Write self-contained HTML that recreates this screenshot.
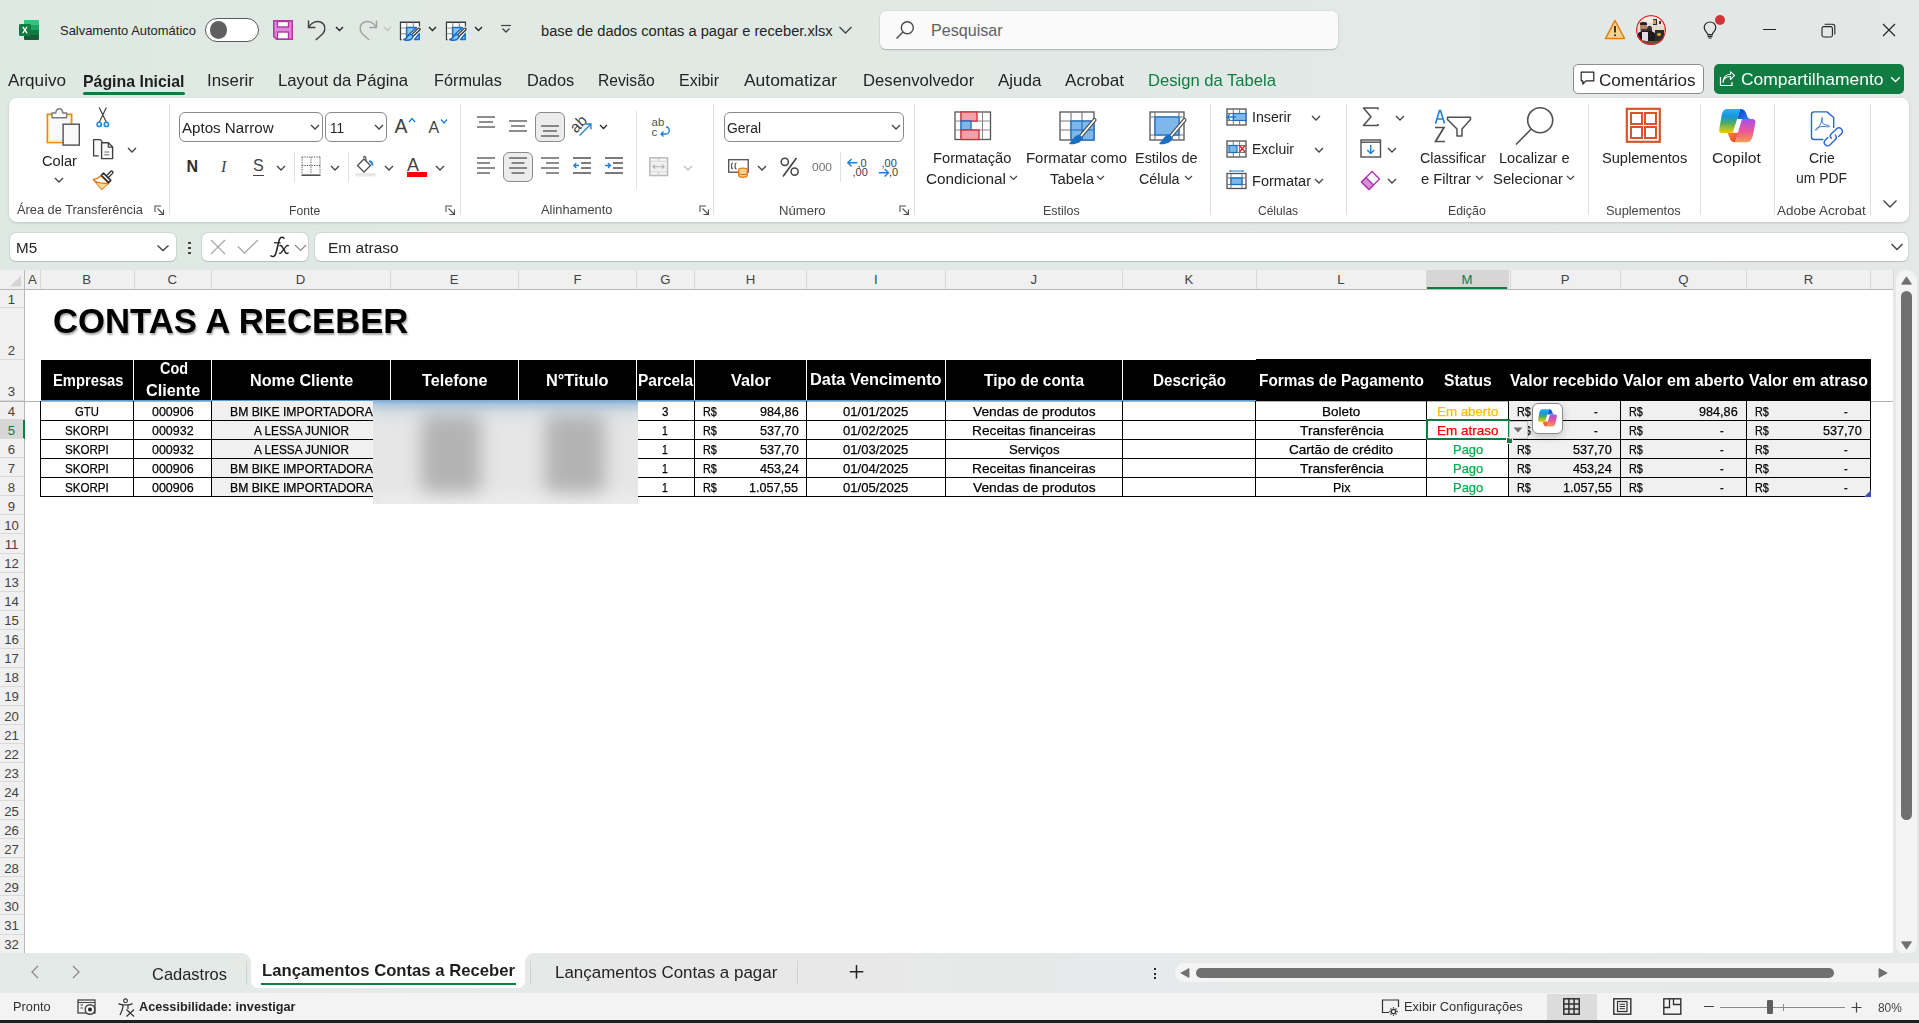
<!DOCTYPE html>
<html><head><meta charset="utf-8"><style>
html,body{margin:0;padding:0;}
body{width:1919px;height:1023px;overflow:hidden;position:relative;background:linear-gradient(90deg,#dfe9e3 0px,#e1e9e5 900px,#e2e9e6 1400px,#e4e8e7 1919px);font-family:'Liberation Sans',sans-serif;}
.t{position:absolute;white-space:pre;transform-origin:0 0;}
.r{position:absolute;}
svg.r{overflow:visible;}
</style></head><body>
<svg class="r" style="left:19px;top:20px;" width="20" height="20" viewBox="0 0 20 20" fill="none">
<rect x="5" y="0" width="15" height="20" rx="1.5" fill="#21a366"></rect>
<path d="M5 1.5 A1.5 1.5 0 0 1 6.5 0 H18.5 A1.5 1.5 0 0 1 20 1.5 V5 H5z" fill="#33c481"></path>
<rect x="5" y="10" width="15" height="5" fill="#107c41"></rect>
<path d="M5 15 H20 V18.5 A1.5 1.5 0 0 1 18.5 20 H6.5 A1.5 1.5 0 0 1 5 18.5z" fill="#185c37"></path>
<rect x="0" y="4" width="12" height="12" rx="1.2" fill="#107c41"></rect>
<path d="M3.2 6.8 L5 10 L3.1 13.2 H4.6 L5.9 10.9 L7.2 13.2 H8.8 L6.8 10 L8.7 6.8 H7.2 L5.95 9.1 L4.7 6.8z" fill="#fff"></path>
</svg>
<div class="t" style="left:60.00px;top:24.84px;font-size:12.95px;line-height:1;color:#242424;font-weight:normal;font-family:'Liberation Sans',sans-serif;">Salvamento Automático</div>
<div class="r" style="left:205px;top:17.5px;width:52px;height:22px;background:#fff;border:1.3px solid #5a5a5a;border-radius:12px;"></div>
<div class="r" style="left:209.5px;top:21px;width:17.5px;height:17.5px;background:#5f5f5f;border-radius:50%;"></div>
<svg class="r" style="left:273px;top:20px;" width="20" height="20" viewBox="0 0 20 20" fill="none">
<path d="M0.75 0.75 H19.25 V19.25 H3.5 L0.75 16.5z" fill="#d98ad8" stroke="#b0389e" stroke-width="1.5"></path>
<rect x="4.5" y="1.5" width="11" height="5.5" fill="#fff" stroke="#b0389e" stroke-width="1.4"></rect>
<rect x="4.5" y="12" width="11" height="7" fill="#fff" stroke="#b0389e" stroke-width="1.4"></rect>
</svg>
<svg class="r" style="left:306px;top:19px;" width="24" height="22" viewBox="0 0 24 22" fill="none">
<path d="M2.5 1.5 V8.5 H9.5" stroke="#424242" stroke-width="1.4" fill="none"></path>
<path d="M2.8 8.3 C5 4 10 1.5 14.5 3 C19.5 5 20 11 17 14.5 L9.8 21" stroke="#424242" stroke-width="1.4" fill="none"></path>
</svg>
<svg class="r" style="left:335.0px;top:26.25px;" width="9" height="5.5" viewBox="0 0 9 5.5" fill="none"><path d="M1 1 L4.5 4.5 L8 1" stroke="#242424" stroke-width="1.4" fill="none"></path></svg>
<svg class="r" style="left:355px;top:19px;" width="24" height="22" viewBox="0 0 24 22" fill="none">
<path d="M21.5 1.5 V8.5 H14.5" stroke="#a0a0a0" stroke-width="1.4" fill="none"></path>
<path d="M21.2 8.3 C19 4 14 1.5 9.5 3 C4.5 5 4 11 7 14.5 L14.2 21" stroke="#a0a0a0" stroke-width="1.4" fill="none"></path>
</svg>
<svg class="r" style="left:382.5px;top:26.25px;" width="9" height="5.5" viewBox="0 0 9 5.5" fill="none"><path d="M1 1 L4.5 4.5 L8 1" stroke="#c0c0c0" stroke-width="1.3" fill="none"></path></svg>
<svg class="r" style="left:396px;top:16.5px;" width="30" height="28" viewBox="0 0 30 28" fill="none">
<path d="M5.5 22.6 H4.6 V5.3 H23.3 V9.5" stroke="#3c3c3c" stroke-width="1.5" fill="#fff"></path>
<rect x="5.3" y="6" width="17.3" height="16" fill="#fff"></rect>
<path d="M5.2 11 H10.5 M5.2 16.7 H10.5 M10.8 5.5 V10.5 M17.3 5.5 V10.5" stroke="#8a8a8a" stroke-width="1.1"></path>
<path d="M10.6 10.6 H20.6 L10.6 19.5z" fill="#8cc4f0" stroke="#1a6ec2" stroke-width="1.5" stroke-linejoin="round"></path>
<path d="M23.2 16.6 V22.5 H18.6z" fill="#8cc4f0" stroke="#1a6ec2" stroke-width="1.5" stroke-linejoin="round"></path>
<path d="M23 12.2 L16.5 18.4" stroke="#2e2e2e" stroke-width="3.4" stroke-linecap="round"></path>
<path d="M23 12.2 L16.5 18.4" stroke="#f4f4f4" stroke-width="1.1" stroke-linecap="round"></path>
<path d="M15.8 17.6 C13 16.8 11.8 19 10.8 20.5 C10 21.8 9 22.3 7.8 22.5 C10 23.6 14 23.9 16 21.6 C17 20.4 17 18.6 15.8 17.6z" fill="#8cc4f0" stroke="#1a6ec2" stroke-width="1.5" stroke-linejoin="round"></path>
</svg>
<svg class="r" style="left:427.5px;top:26.25px;" width="9" height="5.5" viewBox="0 0 9 5.5" fill="none"><path d="M1 1 L4.5 4.5 L8 1" stroke="#242424" stroke-width="1.4" fill="none"></path></svg>
<svg class="r" style="left:442px;top:16.5px;" width="30" height="28" viewBox="0 0 30 28" fill="none">
<path d="M5.5 22.6 H4.6 V5.3 H23.3 V9.5" stroke="#3c3c3c" stroke-width="1.5" fill="#fff"></path>
<rect x="5.3" y="6" width="17.3" height="16" fill="#fff"></rect>
<path d="M5.2 11 H10.5 M5.2 16.7 H10.5 M10.8 5.5 V10.5 M17.3 5.5 V10.5" stroke="#8a8a8a" stroke-width="1.1"></path>
<path d="M10.6 10.6 H20.6 L10.6 19.5z" fill="#8cc4f0" stroke="#1a6ec2" stroke-width="1.5" stroke-linejoin="round"></path>
<path d="M23.2 16.6 V22.5 H18.6z" fill="#8cc4f0" stroke="#1a6ec2" stroke-width="1.5" stroke-linejoin="round"></path>
<path d="M23 12.2 L16.5 18.4" stroke="#2e2e2e" stroke-width="3.4" stroke-linecap="round"></path>
<path d="M23 12.2 L16.5 18.4" stroke="#f4f4f4" stroke-width="1.1" stroke-linecap="round"></path>
<path d="M15.8 17.6 C13 16.8 11.8 19 10.8 20.5 C10 21.8 9 22.3 7.8 22.5 C10 23.6 14 23.9 16 21.6 C17 20.4 17 18.6 15.8 17.6z" fill="#8cc4f0" stroke="#1a6ec2" stroke-width="1.5" stroke-linejoin="round"></path>
</svg>
<svg class="r" style="left:473.5px;top:26.25px;" width="9" height="5.5" viewBox="0 0 9 5.5" fill="none"><path d="M1 1 L4.5 4.5 L8 1" stroke="#242424" stroke-width="1.4" fill="none"></path></svg>
<svg class="r" style="left:500px;top:24px;" width="12" height="10" viewBox="0 0 12 10" fill="none"><path d="M1 1.5 H11" stroke="#424242" stroke-width="1.2"></path><path d="M2.5 4.5 L6 8 L9.5 4.5" stroke="#424242" stroke-width="1.3"></path></svg>
<div class="t" style="left:541.00px;top:23.58px;font-size:14.67px;line-height:1;color:#242424;font-weight:normal;font-family:'Liberation Sans',sans-serif;">base de dados contas a pagar e receber.xlsx</div>
<svg class="r" style="left:838px;top:25px;" width="15" height="10" viewBox="0 0 15 10" fill="none"><path d="M1.5 2 L7.5 8 L13.5 2" stroke="#424242" stroke-width="1.4"></path></svg>
<div class="r" style="left:880px;top:10.5px;width:458px;height:38px;background:#fafafa;border-radius:6px;box-shadow:0 1px 1.5px rgba(0,0,0,0.22), 0 0 0 0.5px rgba(0,0,0,0.06);"></div>
<svg class="r" style="left:895px;top:20px;" width="20" height="20" viewBox="0 0 20 20" fill="none"><circle cx="12.3" cy="7.7" r="6" stroke="#4a4a4a" stroke-width="1.4"></circle><path d="M8 12 L1.5 18.5" stroke="#4a4a4a" stroke-width="1.5"></path></svg>
<div class="t" style="left:931.00px;top:22.07px;font-size:16.1px;line-height:1;color:#616161;font-weight:normal;font-family:'Liberation Sans',sans-serif;">Pesquisar</div>
<svg class="r" style="left:1604px;top:19px;" width="22" height="21" viewBox="0 0 22 21" fill="none"><path d="M11 1.5 L20.5 19.5 H1.5z" fill="#fbd38c" stroke="#e07f12" stroke-width="1.6" stroke-linejoin="round"></path><path d="M11 7 V13.5" stroke="#242424" stroke-width="1.8"></path><circle cx="11" cy="16.3" r="1" fill="#242424"></circle></svg>
<div class="r" style="left:1636.2px;top:15.2px;width:29.6px;height:29.6px;border-radius:50%;overflow:hidden;background:#e6ddd0;">
<div class="r" style="left:-2px;top:-2px;width:34px;height:34px;filter:blur(0.5px);">
<div class="r" style="left:2px;top:2px;width:30px;height:8px;background:#f2ece2;"></div>
<div class="r" style="left:18.5px;top:5.5px;width:4px;height:6.5px;background:#2c2a30;"></div>
<div class="r" style="left:19.3px;top:6.5px;width:2.4px;height:4.5px;background:#c8a060;"></div>
<div class="r" style="left:24.5px;top:8px;width:2px;height:3px;background:#3a3838;"></div>
<div class="r" style="left:13px;top:12.5px;width:4.5px;height:9px;border-radius:40%;background:#3a3030;"></div>
<div class="r" style="left:6.2px;top:9.5px;width:7px;height:9.5px;border-radius:45% 45% 40% 40%;background:#b48468;"></div>
<div class="r" style="left:6.2px;top:8.8px;width:7px;height:2.6px;border-radius:50% 50% 0 0;background:#2a2222;"></div>
<div class="r" style="left:6.6px;top:15.5px;width:6.2px;height:3.5px;border-radius:0 0 50% 50%;background:#4a3630;"></div>
<div class="r" style="left:3px;top:18px;width:19px;height:14px;border-radius:35% 35% 0 0;background:#1c1a1a;"></div>
<div class="r" style="left:8px;top:19px;width:5.5px;height:11px;background:#e2dae6;"></div>
<div class="r" style="left:6px;top:26.5px;width:5px;height:2.5px;background:#b08670;"></div>
<div class="r" style="left:20.5px;top:16.5px;width:9px;height:11px;background:#2c2a2a;"></div>
<div class="r" style="left:23px;top:19.5px;width:3.8px;height:3.5px;border-radius:40%;background:#d4a434;"></div>
<div class="r" style="left:2px;top:28px;width:30px;height:6px;background:#6a5040;"></div>
</div>
<div class="r" style="left:0;top:0;width:29.6px;height:29.6px;border-radius:50%;box-shadow:0 0 0 1.3px #e02828 inset;"></div>
</div>
<svg class="r" style="left:1703px;top:21px;" width="14" height="18" viewBox="0 0 14 18" fill="none"><path d="M7 1 C3.5 1 1.2 3.6 1.2 6.6 C1.2 9 2.6 10.2 3.8 11.6 C4.4 12.3 4.6 13 4.6 13.6 H9.4 C9.4 13 9.6 12.3 10.2 11.6 C11.4 10.2 12.8 9 12.8 6.6 C12.8 3.6 10.5 1 7 1z" stroke="#242424" stroke-width="1.2"></path><path d="M4.6 15.3 H9.4 M5.3 17 H8.7" stroke="#242424" stroke-width="1.2"></path></svg>
<div class="r" style="left:1715px;top:15px;width:10px;height:10px;background:#d13438;border-radius:50%;"></div>
<div class="r" style="left:1763px;top:28.5px;width:12.5px;height:1.2px;background:#242424;"></div>
<svg class="r" style="left:1821px;top:22.5px;" width="15" height="15" viewBox="0 0 15 15" fill="none"><rect x="1" y="3.6" width="10.4" height="10.4" rx="1.8" stroke="#242424" stroke-width="1.1"></rect><path d="M3.6 1.2 H11.5 C12.8 1.2 13.8 2.2 13.8 3.5 V11.4" stroke="#242424" stroke-width="1.1"></path></svg>
<svg class="r" style="left:1882px;top:23px;" width="14" height="14" viewBox="0 0 14 14" fill="none"><path d="M1 1 L13 13 M13 1 L1 13" stroke="#242424" stroke-width="1.2"></path></svg>
<div class="t" style="left: 8.3px; top: 72.95px; font-size: 16.6px; line-height: 1; color: rgb(36, 36, 36); font-weight: normal; font-family: &quot;Liberation Sans&quot;, sans-serif; transform: scaleX(1.0308);">Arquivo</div>
<div class="t" style="left: 207px; top: 72.95px; font-size: 16.6px; line-height: 1; color: rgb(36, 36, 36); font-weight: normal; font-family: &quot;Liberation Sans&quot;, sans-serif; transform: scaleX(1.0193);">Inserir</div>
<div class="t" style="left: 278px; top: 72.95px; font-size: 16.6px; line-height: 1; color: rgb(36, 36, 36); font-weight: normal; font-family: &quot;Liberation Sans&quot;, sans-serif; transform: scaleX(1.0064);">Layout da Página</div>
<div class="t" style="left: 433.6px; top: 72.95px; font-size: 16.6px; line-height: 1; color: rgb(36, 36, 36); font-weight: normal; font-family: &quot;Liberation Sans&quot;, sans-serif; transform: scaleX(0.9804);">Fórmulas</div>
<div class="t" style="left: 526.6px; top: 72.95px; font-size: 16.6px; line-height: 1; color: rgb(36, 36, 36); font-weight: normal; font-family: &quot;Liberation Sans&quot;, sans-serif; transform: scaleX(0.984);">Dados</div>
<div class="t" style="left: 598px; top: 72.95px; font-size: 16.6px; line-height: 1; color: rgb(36, 36, 36); font-weight: normal; font-family: &quot;Liberation Sans&quot;, sans-serif; transform: scaleX(0.9441);">Revisão</div>
<div class="t" style="left: 679.3px; top: 72.95px; font-size: 16.6px; line-height: 1; color: rgb(36, 36, 36); font-weight: normal; font-family: &quot;Liberation Sans&quot;, sans-serif; transform: scaleX(0.9639);">Exibir</div>
<div class="t" style="left: 744.4px; top: 72.95px; font-size: 16.6px; line-height: 1; color: rgb(36, 36, 36); font-weight: normal; font-family: &quot;Liberation Sans&quot;, sans-serif; transform: scaleX(1.0503);">Automatizar</div>
<div class="t" style="left: 862.5px; top: 72.95px; font-size: 16.6px; line-height: 1; color: rgb(36, 36, 36); font-weight: normal; font-family: &quot;Liberation Sans&quot;, sans-serif; transform: scaleX(1.0046);">Desenvolvedor</div>
<div class="t" style="left: 998px; top: 72.95px; font-size: 16.6px; line-height: 1; color: rgb(36, 36, 36); font-weight: normal; font-family: &quot;Liberation Sans&quot;, sans-serif; transform: scaleX(1.0247);">Ajuda</div>
<div class="t" style="left: 1065.4px; top: 72.95px; font-size: 16.6px; line-height: 1; color: rgb(36, 36, 36); font-weight: normal; font-family: &quot;Liberation Sans&quot;, sans-serif; transform: scaleX(1.0334);">Acrobat</div>
<div class="t" style="left: 83px; top: 73.29px; font-size: 16.2px; line-height: 1; color: rgb(31, 31, 31); font-weight: bold; font-family: &quot;Liberation Sans&quot;, sans-serif; transform: scaleX(0.981);">Página Inicial</div>
<div class="r" style="left:83px;top:92px;width:101.5px;height:3px;background:#107c41;border-radius:1.5px;"></div>
<div class="t" style="left: 1148px; top: 72.95px; font-size: 16.6px; line-height: 1; color: rgb(16, 124, 65); font-weight: normal; font-family: &quot;Liberation Sans&quot;, sans-serif; transform: scaleX(1.0005);">Design da Tabela</div>
<div class="r" style="left:1573px;top:64px;width:131px;height:30px;background:#fff;border:1px solid #8c8c8c;border-radius:5px;box-sizing:border-box;"></div>
<svg class="r" style="left:1580px;top:71px;" width="15" height="15" viewBox="0 0 15 15" fill="none"><path d="M1.2 1.2 H13.8 V9.8 H6 L2.8 13 V9.8 H1.2z" stroke="#242424" stroke-width="1.2" stroke-linejoin="round"></path></svg>
<div class="t" style="left: 1599px; top: 71.61px; font-size: 17px; line-height: 1; color: rgb(36, 36, 36); font-weight: normal; font-family: &quot;Liberation Sans&quot;, sans-serif; transform: scaleX(1.0023);">Comentários</div>
<div class="r" style="left:1714px;top:64px;width:190px;height:30px;background:#107c41;border-radius:5px;"></div>
<svg class="r" style="left:1719px;top:71px;" width="17" height="16" viewBox="0 0 17 16" fill="none"><path d="M1.5 6 V14.5 H13 V11" stroke="#fff" stroke-width="1.2"></path><path d="M4 11.5 C4.5 7.5 7.5 5.5 11.5 5.5 V8.5 L15.5 4.3 L11.5 0.8 V3.3 C6.5 3.3 4 7 4 11.5z" stroke="#fff" stroke-width="1.1" stroke-linejoin="round"></path></svg>
<div class="t" style="left: 1740.5px; top: 71.27px; font-size: 17.4px; line-height: 1; color: rgb(255, 255, 255); font-weight: normal; font-family: &quot;Liberation Sans&quot;, sans-serif; transform: scaleX(1.0029);">Compartilhamento</div>
<svg class="r" style="left:1890px;top:76px;" width="11" height="7" viewBox="0 0 11 7" fill="none"><path d="M1.2 1.2 L5.5 5.5 L9.8 1.2" stroke="#fff" stroke-width="1.3"></path></svg>
<div class="r" style="left:9px;top:98px;width:1900px;height:124px;background:#fff;border-radius:8px;box-shadow:0 1px 2.5px rgba(0,0,0,0.16);"></div>
<div class="r" style="left:169px;top:104px;width:1px;height:111px;background:#e0e0e0;"></div>
<div class="r" style="left:460px;top:104px;width:1px;height:111px;background:#e0e0e0;"></div>
<div class="r" style="left:713px;top:104px;width:1px;height:111px;background:#e0e0e0;"></div>
<div class="r" style="left:914px;top:104px;width:1px;height:111px;background:#e0e0e0;"></div>
<div class="r" style="left:1210px;top:104px;width:1px;height:111px;background:#e0e0e0;"></div>
<div class="r" style="left:1346px;top:104px;width:1px;height:111px;background:#e0e0e0;"></div>
<div class="r" style="left:1588px;top:104px;width:1px;height:111px;background:#e0e0e0;"></div>
<div class="r" style="left:1700px;top:104px;width:1px;height:111px;background:#e0e0e0;"></div>
<div class="r" style="left:1774px;top:104px;width:1px;height:111px;background:#e0e0e0;"></div>
<div class="r" style="left:1870px;top:104px;width:1px;height:111px;background:#e0e0e0;"></div>
<div class="t" style="left: 17px; top: 204.36px; font-size: 12.8px; line-height: 1; color: rgb(66, 66, 66); font-weight: normal; font-family: &quot;Liberation Sans&quot;, sans-serif; transform: scaleX(1.0006);">Área de Transferência</div>
<div class="t" style="left: 288.5px; top: 204.7px; font-size: 12.4px; line-height: 1; color: rgb(66, 66, 66); font-weight: normal; font-family: &quot;Liberation Sans&quot;, sans-serif; transform: scaleX(0.9846);">Fonte</div>
<div class="t" style="left: 541px; top: 204.36px; font-size: 12.8px; line-height: 1; color: rgb(66, 66, 66); font-weight: normal; font-family: &quot;Liberation Sans&quot;, sans-serif; transform: scaleX(1.0036);">Alinhamento</div>
<div class="t" style="left: 779.4px; top: 204.2px; font-size: 13px; line-height: 1; color: rgb(66, 66, 66); font-weight: normal; font-family: &quot;Liberation Sans&quot;, sans-serif; transform: scaleX(1.0076);">Número</div>
<div class="t" style="left: 1043px; top: 204.62px; font-size: 12.5px; line-height: 1; color: rgb(66, 66, 66); font-weight: normal; font-family: &quot;Liberation Sans&quot;, sans-serif; transform: scaleX(0.9938);">Estilos</div>
<div class="t" style="left: 1257.6px; top: 204.87px; font-size: 12.2px; line-height: 1; color: rgb(66, 66, 66); font-weight: normal; font-family: &quot;Liberation Sans&quot;, sans-serif; transform: scaleX(0.9863);">Células</div>
<div class="t" style="left: 1447.6px; top: 204.7px; font-size: 12.4px; line-height: 1; color: rgb(66, 66, 66); font-weight: normal; font-family: &quot;Liberation Sans&quot;, sans-serif; transform: scaleX(0.9976);">Edição</div>
<div class="t" style="left: 1606px; top: 204.62px; font-size: 12.5px; line-height: 1; color: rgb(66, 66, 66); font-weight: normal; font-family: &quot;Liberation Sans&quot;, sans-serif; transform: scaleX(1.0237);">Suplementos</div>
<div class="t" style="left: 1777px; top: 203.94px; font-size: 13.3px; line-height: 1; color: rgb(66, 66, 66); font-weight: normal; font-family: &quot;Liberation Sans&quot;, sans-serif; transform: scaleX(1.0166);">Adobe Acrobat</div>
<svg class="r" style="left:154px;top:204.5px;" width="11" height="11" viewBox="0 0 11 11" fill="none"><path d="M1 7 V1 H7" stroke="#505050" stroke-width="1.1"></path><path d="M3.5 3.5 L9.5 9.5 M4.5 9.5 H9.5 V4.5" stroke="#505050" stroke-width="1.1"></path></svg>
<svg class="r" style="left:445px;top:204.5px;" width="11" height="11" viewBox="0 0 11 11" fill="none"><path d="M1 7 V1 H7" stroke="#505050" stroke-width="1.1"></path><path d="M3.5 3.5 L9.5 9.5 M4.5 9.5 H9.5 V4.5" stroke="#505050" stroke-width="1.1"></path></svg>
<svg class="r" style="left:699px;top:204.5px;" width="11" height="11" viewBox="0 0 11 11" fill="none"><path d="M1 7 V1 H7" stroke="#505050" stroke-width="1.1"></path><path d="M3.5 3.5 L9.5 9.5 M4.5 9.5 H9.5 V4.5" stroke="#505050" stroke-width="1.1"></path></svg>
<svg class="r" style="left:899px;top:204.5px;" width="11" height="11" viewBox="0 0 11 11" fill="none"><path d="M1 7 V1 H7" stroke="#505050" stroke-width="1.1"></path><path d="M3.5 3.5 L9.5 9.5 M4.5 9.5 H9.5 V4.5" stroke="#505050" stroke-width="1.1"></path></svg>
<svg class="r" style="left:1882px;top:199px;" width="16" height="10" viewBox="0 0 16 10" fill="none"><path d="M1.5 1.5 L8 8 L14.5 1.5" stroke="#424242" stroke-width="1.4"></path></svg>
<svg class="r" style="left:40px;top:102px;" width="46" height="48" viewBox="0 0 46 48" fill="none">
<rect x="7.3" y="12.2" width="24.4" height="28.4" fill="#fafafa" stroke="#e8891a" stroke-width="1.5"></rect>
<rect x="8.8" y="13.7" width="21.4" height="25.4" fill="#fafafa" stroke="#f9dc8e" stroke-width="1.2"></rect>
<path d="M12 11 H15.8 C16 8.4 17.5 6.8 19.3 6.8 C21.1 6.8 22.6 8.4 22.8 11 H26.6 V15.7 H12z" fill="#fafafa" stroke="#7a7a7a" stroke-width="1.4" stroke-linejoin="round"></path>
<rect x="23.1" y="22.2" width="16.2" height="20.9" fill="#fafafa" stroke="#505050" stroke-width="1.4"></rect>
</svg>
<div class="t" style="left: 42px; top: 153.56px; font-size: 14.7px; line-height: 1; color: rgb(36, 36, 36); font-weight: normal; font-family: &quot;Liberation Sans&quot;, sans-serif; transform: scaleX(0.9969);">Colar</div>
<svg class="r" style="left:54.0px;top:176.5px;" width="10" height="6.0" viewBox="0 0 10 6.0" fill="none"><path d="M1 1 L5.0 5.0 L9 1" stroke="#424242" stroke-width="1.3" fill="none"></path></svg>
<svg class="r" style="left:94px;top:106px;" width="17" height="22" viewBox="0 0 17 22" fill="none">
<path d="M5.2 1.5 L12.4 16.3 M12.4 1.5 L5.2 16.3" stroke="#404040" stroke-width="1.2"></path>
<circle cx="5.2" cy="18.4" r="2.1" stroke="#1b8ad8" stroke-width="1.6" fill="#fff"></circle>
<circle cx="12.4" cy="18.4" r="2.1" stroke="#1b8ad8" stroke-width="1.6" fill="#fff"></circle>
</svg>
<svg class="r" style="left:92px;top:138px;" width="22" height="22" viewBox="0 0 22 22" fill="none">
<path d="M6.8 17.9 H1.6 V1.6 H8.3 L10.4 3.7" stroke="#404040" stroke-width="1.3" fill="#fafafa" stroke-linejoin="round"></path>
<path d="M9.6 4.8 H16.5 L20.6 8.9 V20.6 H9.6z" fill="#fafafa" stroke="#404040" stroke-width="1.4" stroke-linejoin="round"></path>
<path d="M16.3 4.8 V9.1 H20.6" stroke="#404040" stroke-width="1.2"></path>
<path d="M12.3 14 H17.3 M12.3 16.7 H17.3" stroke="#707070" stroke-width="1.1"></path>
</svg>
<svg class="r" style="left:127.0px;top:146.5px;" width="10" height="6.0" viewBox="0 0 10 6.0" fill="none"><path d="M1 1 L5.0 5.0 L9 1" stroke="#424242" stroke-width="1.3" fill="none"></path></svg>
<svg class="r" style="left:88px;top:164px;" width="30" height="30" viewBox="0 0 30 30" fill="none">
<path d="M13.2 11.7 C10.5 14 8 15 5.4 15.5 L13.8 25.2 L20.5 19.1z" fill="#fff" stroke="#e37410" stroke-width="1.5" stroke-linejoin="round"></path>
<path d="M8.6 19 L13.8 25 L19.3 20.2 C15 19.9 11.5 19.5 8.6 19z" fill="#fcd98c"></path>
<path d="M7.6 17.9 C11 18.8 16 19.5 20 19.6" stroke="#e37410" stroke-width="1.4"></path>
<path d="M19.2 12.8 L23.6 8.4" stroke="#303030" stroke-width="4" stroke-linecap="round"></path>
<path d="M19.2 12.8 L23.6 8.4" stroke="#fff" stroke-width="1.4" stroke-linecap="round"></path>
<path d="M13.3 11.3 L15.5 9.1 L22.8 16.4 L20.6 18.6z" fill="#fff" stroke="#303030" stroke-width="1.5" stroke-linejoin="round"></path>
</svg>
<div class="r" style="left:179px;top:112px;width:143.5px;height:30px;background:#fff;border:1px solid #8a8a8a;border-radius:6px;box-sizing:border-box;"></div>
<div class="t" style="left: 182px; top: 119.92px; font-size: 15.1px; line-height: 1; color: rgb(36, 36, 36); font-weight: normal; font-family: &quot;Liberation Sans&quot;, sans-serif; transform: scaleX(1.0018);">Aptos Narrow</div>
<svg class="r" style="left:310.0px;top:124.0px;" width="10" height="6.0" viewBox="0 0 10 6.0" fill="none"><path d="M1 1 L5.0 5.0 L9 1" stroke="#424242" stroke-width="1.3" fill="none"></path></svg>
<div class="r" style="left:325px;top:112px;width:61.5px;height:30px;background:#fff;border:1px solid #8a8a8a;border-radius:6px;box-sizing:border-box;"></div>
<div class="t" style="left: 330px; top: 120px; font-size: 15px; line-height: 1; color: rgb(36, 36, 36); font-weight: normal; font-family: &quot;Liberation Sans&quot;, sans-serif; transform: scaleX(0.8987);">11</div>
<svg class="r" style="left:374.0px;top:124.0px;" width="10" height="6.0" viewBox="0 0 10 6.0" fill="none"><path d="M1 1 L5.0 5.0 L9 1" stroke="#424242" stroke-width="1.3" fill="none"></path></svg>
<div class="t" style="left:394.50px;top:116.99px;font-size:19.5px;line-height:1;color:#424242;font-weight:normal;font-family:'Liberation Sans',sans-serif;">A</div>
<svg class="r" style="left:407.5px;top:117px;" width="8" height="6" viewBox="0 0 8 6" fill="none"><path d="M1 5 L4 1.5 L7 5" stroke="#1b7fd6" stroke-width="1.3"></path></svg>
<div class="t" style="left:428.50px;top:119.96px;font-size:16px;line-height:1;color:#424242;font-weight:normal;font-family:'Liberation Sans',sans-serif;">A</div>
<svg class="r" style="left:440px;top:117.5px;" width="8" height="6" viewBox="0 0 8 6" fill="none"><path d="M1 1.5 L4 5 L7 1.5" stroke="#1b7fd6" stroke-width="1.3"></path></svg>
<div class="t" style="left:186.50px;top:158.76px;font-size:16px;line-height:1;color:#303030;font-weight:bold;font-family:'Liberation Sans',sans-serif;">N</div>
<div class="t" style="left:221.00px;top:158.76px;font-size:16px;line-height:1;color:#424242;font-weight:normal;font-family:'Liberation Sans',sans-serif;font-family:'Liberation Serif',serif;font-style:italic;">I</div>
<div class="t" style="left:253.00px;top:157.96px;font-size:16px;line-height:1;color:#424242;font-weight:normal;font-family:'Liberation Sans',sans-serif;">S</div>
<div class="r" style="left:252.5px;top:174.6px;width:11px;height:1.3px;background:#424242;"></div>
<svg class="r" style="left:276.0px;top:164.5px;" width="10" height="6.0" viewBox="0 0 10 6.0" fill="none"><path d="M1 1 L5.0 5.0 L9 1" stroke="#424242" stroke-width="1.3" fill="none"></path></svg>
<div class="r" style="left:294px;top:152px;width:1px;height:30px;background:#e0e0e0;"></div>
<svg class="r" style="left:301px;top:156px;" width="21" height="21" viewBox="0 0 21 21" fill="none">
<path d="M1 1 H19 M1 1 V18 M19 1 V18 M10 1 V18 M1 9.5 H19" stroke="#505050" stroke-width="1" stroke-dasharray="1.2 1.2"></path>
<path d="M0.5 19.2 H19.5" stroke="#505050" stroke-width="1.6"></path>
</svg>
<svg class="r" style="left:330.0px;top:164.5px;" width="10" height="6.0" viewBox="0 0 10 6.0" fill="none"><path d="M1 1 L5.0 5.0 L9 1" stroke="#424242" stroke-width="1.3" fill="none"></path></svg>
<div class="r" style="left:348px;top:152px;width:1px;height:30px;background:#e0e0e0;"></div>
<svg class="r" style="left:355px;top:156px;" width="22" height="22" viewBox="0 0 22 22" fill="none">
<path d="M9 2 C8 1 9.5 -0.2 10.5 0.8 L11.5 6" stroke="#505050" stroke-width="1.2"></path>
<path d="M2.5 9.5 L9 3 L15.5 9.5 L9 16z" fill="#fff" stroke="#505050" stroke-width="1.4" stroke-linejoin="round"></path>
<path d="M14 5 C16.5 5.5 17.5 7 17.5 9.5" stroke="#1b7fd6" stroke-width="1.8"></path>
<rect x="0.5" y="17" width="20" height="3.5" fill="#e8e8e8"></rect>
</svg>
<svg class="r" style="left:384.0px;top:164.5px;" width="10" height="6.0" viewBox="0 0 10 6.0" fill="none"><path d="M1 1 L5.0 5.0 L9 1" stroke="#424242" stroke-width="1.3" fill="none"></path></svg>
<div class="t" style="left:407.00px;top:156.26px;font-size:18px;line-height:1;color:#424242;font-weight:normal;font-family:'Liberation Sans',sans-serif;">A</div>
<div class="r" style="left:406.5px;top:172px;width:20.5px;height:4.6px;background:#ff0000;"></div>
<svg class="r" style="left:435.0px;top:164.5px;" width="10" height="6.0" viewBox="0 0 10 6.0" fill="none"><path d="M1 1 L5.0 5.0 L9 1" stroke="#424242" stroke-width="1.3" fill="none"></path></svg>
<div class="r" style="left:535px;top:112px;width:30px;height:30px;background:#ececec;border:1px solid #8a8a8a;border-radius:6px;box-sizing:border-box;"></div>
<div class="r" style="left:503px;top:152px;width:30px;height:30px;background:#ececec;border:1px solid #8a8a8a;border-radius:6px;box-sizing:border-box;"></div>
<svg class="r" style="left:477px;top:116px;" width="20" height="20" viewBox="0 0 20 20" fill="none"><path d="M0 1 H18" stroke="#505050" stroke-width="1.3"></path><path d="M2 6 H16" stroke="#505050" stroke-width="1.3"></path><path d="M0 11 H18" stroke="#505050" stroke-width="1.3"></path></svg>
<svg class="r" style="left:509px;top:120px;" width="20" height="20" viewBox="0 0 20 20" fill="none"><path d="M0 1 H18" stroke="#505050" stroke-width="1.3"></path><path d="M2 6 H16" stroke="#505050" stroke-width="1.3"></path><path d="M0 11 H18" stroke="#505050" stroke-width="1.3"></path></svg>
<svg class="r" style="left:541px;top:124px;" width="20" height="20" viewBox="0 0 20 20" fill="none"><path d="M0 2 H18" stroke="#505050" stroke-width="1.3"></path><path d="M2 7 H16" stroke="#505050" stroke-width="1.3"></path><path d="M0 12 H18" stroke="#505050" stroke-width="1.3"></path></svg>
<svg class="r" style="left:477px;top:157px;" width="20" height="20" viewBox="0 0 20 20" fill="none"><path d="M0 1 H18" stroke="#505050" stroke-width="1.3"></path><path d="M0 6 H13" stroke="#505050" stroke-width="1.3"></path><path d="M0 11 H18" stroke="#505050" stroke-width="1.3"></path><path d="M0 16 H13" stroke="#505050" stroke-width="1.3"></path></svg>
<svg class="r" style="left:509px;top:157px;" width="20" height="20" viewBox="0 0 20 20" fill="none"><path d="M0 1 H18" stroke="#505050" stroke-width="1.3"></path><path d="M2.5 6 H15.5" stroke="#505050" stroke-width="1.3"></path><path d="M0 11 H18" stroke="#505050" stroke-width="1.3"></path><path d="M2.5 16 H15.5" stroke="#505050" stroke-width="1.3"></path></svg>
<svg class="r" style="left:541px;top:157px;" width="20" height="20" viewBox="0 0 20 20" fill="none"><path d="M0 1 H18" stroke="#505050" stroke-width="1.3"></path><path d="M5 6 H18" stroke="#505050" stroke-width="1.3"></path><path d="M0 11 H18" stroke="#505050" stroke-width="1.3"></path><path d="M5 16 H18" stroke="#505050" stroke-width="1.3"></path></svg>
<svg class="r" style="left:573px;top:157px;" width="20" height="20" viewBox="0 0 20 20" fill="none"><path d="M0 1 H18 M8 6 H18 M8 11 H18 M0 16 H18" stroke="#505050" stroke-width="1.3"></path><path d="M6 8.5 H0.8 M3.3 6 L0.8 8.5 L3.3 11" stroke="#1b7fd6" stroke-width="1.3"></path></svg>
<svg class="r" style="left:605px;top:157px;" width="20" height="20" viewBox="0 0 20 20" fill="none"><path d="M0 1 H18 M8 6 H18 M8 11 H18 M0 16 H18" stroke="#505050" stroke-width="1.3"></path><path d="M0 8.5 H5.5 M3 6 L5.5 8.5 L3 11" stroke="#1b7fd6" stroke-width="1.3"></path></svg>
<div class="t" style="left:574px;top:113.5px;font-size:15.5px;line-height:1;color:#424242;transform:rotate(-45deg);transform-origin:9px 14px;">ab</div>
<svg class="r" style="left:578px;top:120px;" width="15" height="17" viewBox="0 0 15 17" fill="none"><path d="M1.5 15.5 L13 4 M7.5 4 H13 V9.5" stroke="#1b82d4" stroke-width="1.3"></path></svg>
<svg class="r" style="left:598.8px;top:124.25px;" width="9" height="5.5" viewBox="0 0 9 5.5" fill="none"><path d="M1 1 L4.5 4.5 L8 1" stroke="#242424" stroke-width="1.3" fill="none"></path></svg>
<div class="r" style="left:636px;top:111px;width:1px;height:78px;background:#e0e0e0;"></div>
<div class="t" style="left:651.50px;top:116.77px;font-size:11.5px;line-height:1;color:#505050;font-weight:normal;font-family:'Liberation Sans',sans-serif;">ab</div>
<div class="t" style="left:651.50px;top:126.77px;font-size:11.5px;line-height:1;color:#505050;font-weight:normal;font-family:'Liberation Sans',sans-serif;">c</div>
<svg class="r" style="left:659px;top:126px;" width="12" height="12" viewBox="0 0 12 12" fill="none"><path d="M7 1 C11 1 11.5 8 7 8 H2 M4.5 5.5 L2 8 L4.5 10.5" stroke="#1b7fd6" stroke-width="1.3"></path></svg>
<svg class="r" style="left:649px;top:157px;" width="20" height="20" viewBox="0 0 20 20" fill="none"><rect x="0.7" y="0.7" width="18" height="18" fill="#ddd" stroke="#b8b8b8" stroke-width="1.2"></rect><rect x="2" y="5" width="15.4" height="9.4" fill="#f0f0f0"></rect><path d="M2 2.8 H8 M11 2.8 H17 M2 16.4 H8 M11 16.4 H17" stroke="#fff" stroke-width="1.2"></path><path d="M4 9.7 H15 M6 7.7 L4 9.7 L6 11.7 M13 7.7 L15 9.7 L13 11.7" stroke="#b0b0b0" stroke-width="1.1"></path></svg>
<svg class="r" style="left:683.0px;top:164.5px;" width="10" height="6.0" viewBox="0 0 10 6.0" fill="none"><path d="M1 1 L5.0 5.0 L9 1" stroke="#b8b8b8" stroke-width="1.2" fill="none"></path></svg>
<div class="r" style="left:724px;top:112px;width:180px;height:30px;background:#fff;border:1px solid #8a8a8a;border-radius:6px;box-sizing:border-box;"></div>
<div class="t" style="left: 727px; top: 120.85px; font-size: 14px; line-height: 1; color: rgb(36, 36, 36); font-weight: normal; font-family: &quot;Liberation Sans&quot;, sans-serif; transform: scaleX(0.9932);">Geral</div>
<svg class="r" style="left:891.0px;top:124.0px;" width="10" height="6.0" viewBox="0 0 10 6.0" fill="none"><path d="M1 1 L5.0 5.0 L9 1" stroke="#424242" stroke-width="1.3" fill="none"></path></svg>
<svg class="r" style="left:728px;top:159px;" width="22" height="19" viewBox="0 0 22 19" fill="none">
<rect x="0.7" y="0.7" width="19.5" height="12.5" fill="#fff" stroke="#505050" stroke-width="1.3"></rect>
<path d="M5 4 C3 4 3 10 5 10 M8.5 4 C6.5 4 6.5 10 8.5 10" stroke="#505050" stroke-width="1.2"></path>
<ellipse cx="15" cy="11" rx="4.3" ry="1.8" fill="#fbd08c" stroke="#e37a0f" stroke-width="1.3"></ellipse>
<path d="M10.7 11 V16.5 C10.7 18.8 19.3 18.8 19.3 16.5 V11" fill="#fbd08c" stroke="#e37a0f" stroke-width="1.3"></path>
<path d="M10.7 14 C10.7 16 19.3 16 19.3 14" stroke="#e37a0f" stroke-width="1.1"></path>
</svg>
<svg class="r" style="left:757.0px;top:164.5px;" width="10" height="6.0" viewBox="0 0 10 6.0" fill="none"><path d="M1 1 L5.0 5.0 L9 1" stroke="#424242" stroke-width="1.3" fill="none"></path></svg>
<svg class="r" style="left:778px;top:156px;" width="24" height="22" viewBox="0 0 24 22" fill="none"><circle cx="6.8" cy="5.8" r="3.6" stroke="#424242" stroke-width="1.5"></circle><circle cx="16.6" cy="15.6" r="3.6" stroke="#424242" stroke-width="1.5"></circle><path d="M18.5 2 L5 20.5" stroke="#424242" stroke-width="1.6"></path></svg>
<div class="t" style="left: 812px; top: 161.77px; font-size: 11.5px; line-height: 1; color: rgb(112, 112, 112); font-weight: normal; font-family: &quot;Liberation Sans&quot;, sans-serif; transform: scaleX(1.0423);">000</div>
<div class="r" style="left:839.5px;top:152px;width:1px;height:30px;background:#e0e0e0;"></div>
<svg class="r" style="left:846px;top:157px;" width="14" height="12" viewBox="0 0 14 12" fill="none"><path d="M11.5 5.8 H1.8 M5.6 2 L1.8 5.8 L5.6 9.6" stroke="#1b7fd6" stroke-width="1.4"></path></svg>
<div class="t" style="left:857.50px;top:157.99px;font-size:11px;line-height:1;color:#424242;font-weight:normal;font-family:'Liberation Sans',sans-serif;">,0</div>
<div class="t" style="left:852.50px;top:167.49px;font-size:11px;line-height:1;color:#424242;font-weight:normal;font-family:'Liberation Sans',sans-serif;">,00</div>
<svg class="r" style="left:878px;top:167px;" width="14" height="12" viewBox="0 0 14 12" fill="none"><path d="M0.8 5.8 H10.5 M6.7 2 L10.5 5.8 L6.7 9.6" stroke="#1b7fd6" stroke-width="1.4"></path></svg>
<div class="t" style="left:881.50px;top:157.99px;font-size:11px;line-height:1;color:#424242;font-weight:normal;font-family:'Liberation Sans',sans-serif;">,00</div>
<div class="t" style="left:889.00px;top:167.49px;font-size:11px;line-height:1;color:#424242;font-weight:normal;font-family:'Liberation Sans',sans-serif;">,0</div>
<svg class="r" style="left:954px;top:111px;" width="38" height="30" viewBox="0 0 38 30" fill="none">
<rect x="1" y="1" width="35.5" height="27.5" fill="#fff" stroke="#555" stroke-width="1.3"></rect>
<path d="M1 10 H36.5 M1 19 H36.5 M7 1 V28.5 M28.5 1 V28.5" stroke="#888" stroke-width="1"></path>
<rect x="7" y="1" width="16" height="9" fill="#f4a0a8" stroke="#d42a34" stroke-width="1.3"></rect>
<rect x="7" y="10" width="10" height="9" fill="#7eb8ea" stroke="#1b6fc2" stroke-width="1.3"></rect>
<rect x="7" y="19" width="18" height="9.5" fill="#f4a0a8" stroke="#d42a34" stroke-width="1.3"></rect>
</svg>
<div class="t" style="left: 933.4px; top: 151.36px; font-size: 14.7px; line-height: 1; color: rgb(36, 36, 36); font-weight: normal; font-family: &quot;Liberation Sans&quot;, sans-serif; transform: scaleX(1.0003);">Formatação</div>
<div class="t" style="left: 1026px; top: 151.36px; font-size: 14.7px; line-height: 1; color: rgb(36, 36, 36); font-weight: normal; font-family: &quot;Liberation Sans&quot;, sans-serif; transform: scaleX(1.0143);">Formatar como</div>
<div class="t" style="left: 1135px; top: 151.36px; font-size: 14.7px; line-height: 1; color: rgb(36, 36, 36); font-weight: normal; font-family: &quot;Liberation Sans&quot;, sans-serif; transform: scaleX(0.9829);">Estilos de</div>
<div class="t" style="left: 926px; top: 171.56px; font-size: 14.7px; line-height: 1; color: rgb(36, 36, 36); font-weight: normal; font-family: &quot;Liberation Sans&quot;, sans-serif; transform: scaleX(1.0421);">Condicional</div>
<svg class="r" style="left:1008.5px;top:175.25px;" width="9" height="5.5" viewBox="0 0 9 5.5" fill="none"><path d="M1 1 L4.5 4.5 L8 1" stroke="#424242" stroke-width="1.2" fill="none"></path></svg>
<div class="t" style="left: 1050px; top: 171.56px; font-size: 14.7px; line-height: 1; color: rgb(36, 36, 36); font-weight: normal; font-family: &quot;Liberation Sans&quot;, sans-serif; transform: scaleX(1.0166);">Tabela</div>
<svg class="r" style="left:1095.5px;top:175.25px;" width="9" height="5.5" viewBox="0 0 9 5.5" fill="none"><path d="M1 1 L4.5 4.5 L8 1" stroke="#424242" stroke-width="1.2" fill="none"></path></svg>
<div class="t" style="left: 1139px; top: 171.56px; font-size: 14.7px; line-height: 1; color: rgb(36, 36, 36); font-weight: normal; font-family: &quot;Liberation Sans&quot;, sans-serif; transform: scaleX(0.9726);">Célula</div>
<svg class="r" style="left:1183.5px;top:175.25px;" width="9" height="5.5" viewBox="0 0 9 5.5" fill="none"><path d="M1 1 L4.5 4.5 L8 1" stroke="#424242" stroke-width="1.2" fill="none"></path></svg>
<svg class="r" style="left:1059px;top:111px;" width="38" height="35" viewBox="0 0 38 35" fill="none"><rect x="1" y="1" width="34" height="28" fill="#fff" stroke="#555" stroke-width="1.3"></rect><path d="M1 10 H35 M1 19 H35 M12 1 V29 M23 1 V29" stroke="#777" stroke-width="1.1"></path><rect x="12" y="10" width="23" height="19" fill="#7eb8ea" stroke="#1b6fc2" stroke-width="1.3"></rect><path d="M12 19 H35 M23 10 V29" stroke="#1b6fc2" stroke-width="1.1"></path><path d="M35.5 9 L22 25" stroke="#505050" stroke-width="4.2" stroke-linecap="round"></path><path d="M35.5 9 L22 25" stroke="#fff" stroke-width="1.8" stroke-linecap="round"></path><path d="M21 24 C17 23 15 27 10 33 C16 34 22 32 24 27z" fill="#1b6fc2"></path></svg>
<svg class="r" style="left:1149px;top:111px;" width="38" height="35" viewBox="0 0 38 35" fill="none"><rect x="1" y="1" width="34" height="28" fill="#fff" stroke="#555" stroke-width="1.3"></rect><path d="M1 6 H35 M1 24 H35 M6 1 V29 M30 1 V29" stroke="#777" stroke-width="1.1"></path><rect x="6" y="6" width="24" height="18" fill="#7eb8ea" stroke="#1b6fc2" stroke-width="1.3"></rect><path d="M35.5 9 L22 25" stroke="#505050" stroke-width="4.2" stroke-linecap="round"></path><path d="M35.5 9 L22 25" stroke="#fff" stroke-width="1.8" stroke-linecap="round"></path><path d="M21 24 C17 23 15 27 10 33 C16 34 22 32 24 27z" fill="#1b6fc2"></path></svg>
<svg class="r" style="left:1225.5px;top:108px;" width="21" height="20" viewBox="0 0 21 20" fill="none"><rect x="1" y="1" width="19" height="16" fill="#fff" stroke="#505050" stroke-width="1.3"></rect><path d="M1 5.5 H20 M1 12.5 H20 M7.3 1 V17 M13.6 1 V17" stroke="#777" stroke-width="1"></path><rect x="7.3" y="5.5" width="12.7" height="7" fill="#7eb8ea" stroke="#1b6fc2" stroke-width="1.2"></rect><path d="M10 9 H1 M4 6 L1 9 L4 12" stroke="#1b7fd6" stroke-width="1.4" fill="#fff"></path></svg>
<svg class="r" style="left:1225.5px;top:140px;" width="21" height="20" viewBox="0 0 21 20" fill="none"><rect x="1" y="1" width="19" height="16" fill="#fff" stroke="#505050" stroke-width="1.3"></rect><path d="M1 5.5 H20 M1 12.5 H20 M7.3 1 V17 M13.6 1 V17" stroke="#777" stroke-width="1"></path><rect x="3" y="5.5" width="8" height="7" fill="#7eb8ea" stroke="#1b6fc2" stroke-width="1.2"></rect><path d="M13.5 5.5 L19 12 M19 5.5 L13.5 12" stroke="#e02030" stroke-width="1.4"></path></svg>
<svg class="r" style="left:1225.5px;top:170px;" width="21" height="20" viewBox="0 0 21 20" fill="none"><rect x="1" y="3.5" width="19" height="15" fill="#fff" stroke="#505050" stroke-width="1.3"></rect><path d="M1 8 H20 M1 14.5 H20 M5 3.5 V18.5 M16 3.5 V18.5" stroke="#777" stroke-width="1"></path><rect x="5" y="8" width="11" height="6.5" fill="#7eb8ea" stroke="#1b6fc2" stroke-width="1.3"></rect><path d="M4 1 H17 M4 0 V2 M17 0 V2" stroke="#1b7fd6" stroke-width="1.1"></path></svg>
<div class="t" style="left: 1251.5px; top: 110.36px; font-size: 14.7px; line-height: 1; color: rgb(36, 36, 36); font-weight: normal; font-family: &quot;Liberation Sans&quot;, sans-serif; transform: scaleX(0.9678);">Inserir</div>
<svg class="r" style="left:1311.0px;top:114.5px;" width="10" height="6.0" viewBox="0 0 10 6.0" fill="none"><path d="M1 1 L5.0 5.0 L9 1" stroke="#424242" stroke-width="1.3" fill="none"></path></svg>
<div class="t" style="left: 1252px; top: 142.16px; font-size: 14.7px; line-height: 1; color: rgb(36, 36, 36); font-weight: normal; font-family: &quot;Liberation Sans&quot;, sans-serif; transform: scaleX(0.9529);">Excluir</div>
<svg class="r" style="left:1314.0px;top:146.5px;" width="10" height="6.0" viewBox="0 0 10 6.0" fill="none"><path d="M1 1 L5.0 5.0 L9 1" stroke="#424242" stroke-width="1.3" fill="none"></path></svg>
<div class="t" style="left: 1252px; top: 173.76px; font-size: 14.7px; line-height: 1; color: rgb(36, 36, 36); font-weight: normal; font-family: &quot;Liberation Sans&quot;, sans-serif; transform: scaleX(0.9903);">Formatar</div>
<svg class="r" style="left:1314.0px;top:178.0px;" width="10" height="6.0" viewBox="0 0 10 6.0" fill="none"><path d="M1 1 L5.0 5.0 L9 1" stroke="#424242" stroke-width="1.3" fill="none"></path></svg>
<svg class="r" style="left:1362px;top:107px;" width="18" height="20" viewBox="0 0 18 20" fill="none"><path d="M16 2.5 V1 H1.5 L9 9.8 L1.5 18.6 H16 V17" stroke="#505050" stroke-width="1.5" stroke-linejoin="round"></path></svg>
<svg class="r" style="left:1395.0px;top:114.5px;" width="10" height="6.0" viewBox="0 0 10 6.0" fill="none"><path d="M1 1 L5.0 5.0 L9 1" stroke="#424242" stroke-width="1.3" fill="none"></path></svg>
<svg class="r" style="left:1360px;top:139px;" width="22" height="19" viewBox="0 0 22 19" fill="none"><rect x="1" y="1" width="19.5" height="17" fill="#fff" stroke="#505050" stroke-width="1.4"></rect><path d="M1 3.2 H20.5" stroke="#505050" stroke-width="1.4"></path><path d="M10.7 6 V14.5 M7.2 11 L10.7 14.5 L14.2 11" stroke="#1b7fd6" stroke-width="1.4"></path></svg>
<svg class="r" style="left:1387.0px;top:146.5px;" width="10" height="6.0" viewBox="0 0 10 6.0" fill="none"><path d="M1 1 L5.0 5.0 L9 1" stroke="#424242" stroke-width="1.3" fill="none"></path></svg>
<svg class="r" style="left:1360px;top:170px;" width="22" height="22" viewBox="0 0 22 22" fill="none"><path d="M1.5 12 L12 1.5 L19.5 9 L9 19.5z" fill="#fff" stroke="#b23bb3" stroke-width="1.5" stroke-linejoin="round"></path><path d="M1.5 12 L6 7.5 L13.5 15 L9 19.5z" fill="#d58fd6" stroke="#b23bb3" stroke-width="1.5" stroke-linejoin="round"></path></svg>
<svg class="r" style="left:1387.0px;top:178.0px;" width="10" height="6.0" viewBox="0 0 10 6.0" fill="none"><path d="M1 1 L5.0 5.0 L9 1" stroke="#424242" stroke-width="1.3" fill="none"></path></svg>
<svg class="r" style="left:1434px;top:108.8px;" width="38" height="36" viewBox="0 0 38 36" fill="none">
<path d="M1.5 14.5 L5.5 1.5 H6.5 L10.5 14.5 M3 10 H9" stroke="#1b7fd6" stroke-width="1.6"></path>
<path d="M1 18.5 H10 L1.5 32.5 H11" stroke="#505050" stroke-width="1.7"></path>
<path d="M13.5 8.3 H36.5 V10.5 L28 20 V27 H23 V20 L13.5 10.5z" fill="#fff" stroke="#505050" stroke-width="1.5" stroke-linejoin="round"></path>
</svg>
<div class="t" style="left: 1420px; top: 151.36px; font-size: 14.7px; line-height: 1; color: rgb(36, 36, 36); font-weight: normal; font-family: &quot;Liberation Sans&quot;, sans-serif; transform: scaleX(0.9742);">Classificar</div>
<div class="t" style="left: 1421px; top: 171.56px; font-size: 14.7px; line-height: 1; color: rgb(36, 36, 36); font-weight: normal; font-family: &quot;Liberation Sans&quot;, sans-serif; transform: scaleX(1.0044);">e Filtrar</div>
<svg class="r" style="left:1474.5px;top:175.25px;" width="9" height="5.5" viewBox="0 0 9 5.5" fill="none"><path d="M1 1 L4.5 4.5 L8 1" stroke="#424242" stroke-width="1.2" fill="none"></path></svg>
<svg class="r" style="left:1515px;top:107px;" width="39" height="39" viewBox="0 0 39 39" fill="none"><circle cx="25.2" cy="13.2" r="12.5" stroke="#505050" stroke-width="1.6" fill="#fff"></circle><path d="M16.3 22 L1 37.5" stroke="#505050" stroke-width="1.6"></path></svg>
<div class="t" style="left: 1499px; top: 151.36px; font-size: 14.7px; line-height: 1; color: rgb(36, 36, 36); font-weight: normal; font-family: &quot;Liberation Sans&quot;, sans-serif; transform: scaleX(0.9939);">Localizar e</div>
<div class="t" style="left: 1493px; top: 171.56px; font-size: 14.7px; line-height: 1; color: rgb(36, 36, 36); font-weight: normal; font-family: &quot;Liberation Sans&quot;, sans-serif; transform: scaleX(1.0086);">Selecionar</div>
<svg class="r" style="left:1565.5px;top:175.25px;" width="9" height="5.5" viewBox="0 0 9 5.5" fill="none"><path d="M1 1 L4.5 4.5 L8 1" stroke="#424242" stroke-width="1.2" fill="none"></path></svg>
<svg class="r" style="left:1625px;top:107px;" width="38" height="38" viewBox="0 0 38 38" fill="none"><rect x="1.8" y="1.8" width="33" height="33" stroke="#d9542a" stroke-width="2.2"></rect><rect x="6" y="6" width="11" height="11" stroke="#d9542a" stroke-width="2"></rect><rect x="20" y="6" width="11" height="11" stroke="#d9542a" stroke-width="2"></rect><rect x="6" y="20" width="11" height="11" stroke="#d9542a" stroke-width="2"></rect><rect x="20" y="20" width="11" height="11" stroke="#d9542a" stroke-width="2"></rect></svg>
<div class="t" style="left: 1601.5px; top: 151.36px; font-size: 14.7px; line-height: 1; color: rgb(36, 36, 36); font-weight: normal; font-family: &quot;Liberation Sans&quot;, sans-serif; transform: scaleX(0.9949);">Suplementos</div>
<svg class="r" style="left:1718.6px;top:109px;" width="36.6" height="33.7" viewBox="0 0 37 34" fill="none"><defs>
<linearGradient id="cg1" x1="0" y1="0" x2="0" y2="1"><stop offset="0" stop-color="#22b4f8"></stop><stop offset="0.3" stop-color="#1796dc"></stop><stop offset="0.58" stop-color="#4aab6a"></stop><stop offset="0.8" stop-color="#a8c030"></stop><stop offset="1" stop-color="#f5c800"></stop></linearGradient>
<linearGradient id="cg2" x1="0" y1="0" x2="0" y2="1"><stop offset="0" stop-color="#a450f0"></stop><stop offset="0.5" stop-color="#ea5598"></stop><stop offset="0.85" stop-color="#f28668"></stop><stop offset="1" stop-color="#f5a050"></stop></linearGradient>
<linearGradient id="cg3" x1="0" y1="0" x2="1" y2="1"><stop offset="0" stop-color="#0a36c8"></stop><stop offset="1" stop-color="#2a86ee"></stop></linearGradient>
<linearGradient id="cg4" x1="0" y1="0" x2="1" y2="1"><stop offset="0" stop-color="#ff8a40"></stop><stop offset="1" stop-color="#e03a20"></stop></linearGradient>
</defs>
<path d="M21.5 0 C24.5 0 26.5 1.5 27.5 4.5 C28.3 7 29 9.5 31.5 10.1 H18.3z" fill="url(#cg3)"></path>
<path d="M8.6 24 H19.6 L16.3 33.6 C13.5 33.6 11.8 32.3 11 29.8z" fill="url(#cg4)"></path>
<path d="M7.7 0 H21.6 L13.8 24.3 H3.2 C1.1 24.3 -0.1 23 0.2 20.8 L2.4 7.8 C3.2 2.8 5 0 7.7 0z" fill="url(#cg1)"></path>
<path d="M23.2 10.1 H33.8 C35.9 10.1 37.1 11.6 36.8 13.6 L34.6 25 C33.7 30.5 31.6 33.6 28.5 33.6 H16.3z" fill="url(#cg2)"></path>
</svg>
<div class="t" style="left: 1712px; top: 151.36px; font-size: 14.7px; line-height: 1; color: rgb(36, 36, 36); font-weight: normal; font-family: &quot;Liberation Sans&quot;, sans-serif; transform: scaleX(1.067);">Copilot</div>
<svg class="r" style="left:1800px;top:104px;" width="50" height="46" viewBox="0 0 50 46" fill="none">
<path d="M22.7 35.5 H14 C12.5 35.5 11.5 34.5 11.5 33 V10.5 C11.5 9 12.7 7.9 14.2 7.9 H27 L33.7 13.5 V23.4" stroke="#2a66d6" stroke-width="1.4" stroke-linecap="round" stroke-linejoin="round"></path>
<path d="M22.3 13.5 C21.8 17.5 20.5 21 17.5 25 C16.5 26.3 15.2 26.6 15.5 25.5 C16 24.3 19.5 22.3 24 22.5 C27 22.7 29.8 23.3 29.6 22.2 C29.3 21 26 21.5 23.5 20 C22 19 21.6 16 22.3 13.5z" stroke="#2a66d6" stroke-width="0.9" stroke-linejoin="round"></path>
<path d="M31.3 34.3 C29.9 32.9 29.9 31.1 31.3 29.7 L36.4 24.9 C37.9 23.5 39.9 23.5 41.3 24.9 C42.7 26.3 42.7 28.3 41.3 29.8 L38.6 32.4" stroke="#2a66d6" stroke-width="1.4" stroke-linecap="round"></path>
<path d="M27.8 33.4 L25.3 35.9 C23.9 37.4 23.9 39.4 25.3 40.8 C26.7 42.2 28.7 42.2 30.1 40.8 L35.2 35.7 C36.5 34.4 36.5 32.4 35.3 31.1" stroke="#2a66d6" stroke-width="1.4" stroke-linecap="round"></path>
</svg>
<div class="t" style="left: 1809px; top: 151.36px; font-size: 14.7px; line-height: 1; color: rgb(36, 36, 36); font-weight: normal; font-family: &quot;Liberation Sans&quot;, sans-serif; transform: scaleX(0.9541);">Crie</div>
<div class="t" style="left: 1796px; top: 171.36px; font-size: 14.7px; line-height: 1; color: rgb(36, 36, 36); font-weight: normal; font-family: &quot;Liberation Sans&quot;, sans-serif; transform: scaleX(0.9469);">um PDF</div>
<div class="r" style="left:9.6px;top:232.7px;width:166.4px;height:28.3px;background:#fff;border-radius:6px;box-shadow:0 0 0 1px rgba(0,0,0,0.07), 0 1px 1px rgba(0,0,0,0.12);"></div>
<div class="t" style="left: 16.4px; top: 239.93px; font-size: 15.2px; line-height: 1; color: rgb(36, 36, 36); font-weight: normal; font-family: &quot;Liberation Sans&quot;, sans-serif; transform: scaleX(0.9996);">M5</div>
<svg class="r" style="left:156px;top:244px;" width="14" height="8" viewBox="0 0 14 8" fill="none"><path d="M1.5 1.5 L7 6.5 L12.5 1.5" stroke="#424242" stroke-width="1.4"></path></svg>
<div class="r" style="left:188.3px;top:241.5px;width:2.4px;height:2.4px;background:#424242;"></div>
<div class="r" style="left:188.3px;top:246.5px;width:2.4px;height:2.4px;background:#424242;"></div>
<div class="r" style="left:188.3px;top:251.5px;width:2.4px;height:2.4px;background:#424242;"></div>
<div class="r" style="left:202.4px;top:232.7px;width:105.6px;height:28.3px;background:#fff;border-radius:6px;box-shadow:0 0 0 1px rgba(0,0,0,0.07), 0 1px 1px rgba(0,0,0,0.12);"></div>
<svg class="r" style="left:209.5px;top:238.7px;" width="16" height="16" viewBox="0 0 16 16" fill="none"><path d="M1 1 L15 15 M15 1 L1 15" stroke="#a8a8a8" stroke-width="1.3"></path></svg>
<svg class="r" style="left:237px;top:239px;" width="22" height="15" viewBox="0 0 22 15" fill="none"><path d="M1 7.5 L7.5 14 L21 1" stroke="#a8a8a8" stroke-width="1.3"></path></svg>
<svg class="r" style="left:266px;top:235px;" width="24" height="24" viewBox="0 0 24 24" fill="none"><path d="M17.8 3.2 C17 1.9 14.8 1.8 13.7 3.8 C12.6 5.9 11.2 14.5 9.7 18.8 C8.7 21.6 6.9 22.2 5 20.9" stroke="#242424" stroke-width="1.6" stroke-linecap="round"></path><path d="M8 7.8 H14.6" stroke="#242424" stroke-width="1.3"></path><path d="M13.9 10.6 C15.1 10.1 15.7 10.7 16.6 12.4 L19.4 17.3 C20.2 18.7 21.1 18.7 22.1 18" stroke="#242424" stroke-width="1.5" stroke-linecap="round"></path><path d="M22.5 10.7 C21.6 10.1 20.9 10.5 19.9 11.6 L15.4 17.4 C14.7 18.4 14.1 18.6 13.5 18.2" stroke="#242424" stroke-width="1.3" stroke-linecap="round"></path></svg>
<svg class="r" style="left:293.5px;top:244px;" width="13" height="8" viewBox="0 0 13 8" fill="none"><path d="M1 1 L6.5 6.5 L12 1" stroke="#8a8a8a" stroke-width="1.2"></path></svg>
<div class="r" style="left:314.7px;top:232.7px;width:1593px;height:28.3px;background:#fff;border-radius:6px;box-shadow:0 0 0 1px rgba(0,0,0,0.07), 0 1px 1px rgba(0,0,0,0.12);"></div>
<div class="t" style="left: 327.6px; top: 239.68px; font-size: 15.5px; line-height: 1; color: rgb(36, 36, 36); font-weight: normal; font-family: &quot;Liberation Sans&quot;, sans-serif; transform: scaleX(1.0008);">Em atraso</div>
<svg class="r" style="left:1890px;top:243px;" width="14" height="8" viewBox="0 0 14 8" fill="none"><path d="M1.5 1 L7 6.5 L12.5 1" stroke="#424242" stroke-width="1.4"></path></svg>
<div class="r" style="left:0px;top:270px;width:1893px;height:683px;background:#fff;"></div>
<div class="r" style="left:0px;top:270px;width:1893px;height:19px;background:#f0f0f0;"></div>
<div class="r" style="left:0px;top:289px;width:25px;height:664px;background:#f0f0f0;"></div>
<svg class="r" style="left:9px;top:274.5px;" width="13" height="12" viewBox="0 0 13 12" fill="none"><path d="M12 0.5 V11.5 H1z" fill="#d4d4d4"></path></svg>
<div class="r" style="left:1426px;top:270px;width:81.5px;height:19px;background:#d6d6d6;"></div>
<div class="r" style="left:1426px;top:287px;width:81.5px;height:2px;background:#107c41;"></div>
<div class="r" style="left:40px;top:270px;width:1px;height:19px;background:#d8d8d8;"></div>
<div class="t" style="left:32.50px;top:273.13px;font-size:13.2px;line-height:1;color:#424242;font-weight:normal;font-family:'Liberation Sans',sans-serif;transform:translateX(-50%);">A</div>
<div class="r" style="left:134px;top:270px;width:1px;height:19px;background:#d8d8d8;"></div>
<div class="t" style="left:86.75px;top:273.13px;font-size:13.2px;line-height:1;color:#424242;font-weight:normal;font-family:'Liberation Sans',sans-serif;transform:translateX(-50%);">B</div>
<div class="r" style="left:211px;top:270px;width:1px;height:19px;background:#d8d8d8;"></div>
<div class="t" style="left:172.25px;top:273.13px;font-size:13.2px;line-height:1;color:#424242;font-weight:normal;font-family:'Liberation Sans',sans-serif;transform:translateX(-50%);">C</div>
<div class="r" style="left:390px;top:270px;width:1px;height:19px;background:#d8d8d8;"></div>
<div class="t" style="left:300.50px;top:273.13px;font-size:13.2px;line-height:1;color:#424242;font-weight:normal;font-family:'Liberation Sans',sans-serif;transform:translateX(-50%);">D</div>
<div class="r" style="left:518px;top:270px;width:1px;height:19px;background:#d8d8d8;"></div>
<div class="t" style="left:454.25px;top:273.13px;font-size:13.2px;line-height:1;color:#424242;font-weight:normal;font-family:'Liberation Sans',sans-serif;transform:translateX(-50%);">E</div>
<div class="r" style="left:636px;top:270px;width:1px;height:19px;background:#d8d8d8;"></div>
<div class="t" style="left:577.50px;top:273.13px;font-size:13.2px;line-height:1;color:#424242;font-weight:normal;font-family:'Liberation Sans',sans-serif;transform:translateX(-50%);">F</div>
<div class="r" style="left:694px;top:270px;width:1px;height:19px;background:#d8d8d8;"></div>
<div class="t" style="left:665.50px;top:273.13px;font-size:13.2px;line-height:1;color:#424242;font-weight:normal;font-family:'Liberation Sans',sans-serif;transform:translateX(-50%);">G</div>
<div class="r" style="left:806px;top:270px;width:1px;height:19px;background:#d8d8d8;"></div>
<div class="t" style="left:750.50px;top:273.13px;font-size:13.2px;line-height:1;color:#424242;font-weight:normal;font-family:'Liberation Sans',sans-serif;transform:translateX(-50%);">H</div>
<div class="r" style="left:945px;top:270px;width:1px;height:19px;background:#d8d8d8;"></div>
<div class="t" style="left:875.75px;top:273.13px;font-size:13.2px;line-height:1;color:#424242;font-weight:normal;font-family:'Liberation Sans',sans-serif;transform:translateX(-50%);">I</div>
<div class="r" style="left:1122px;top:270px;width:1px;height:19px;background:#d8d8d8;"></div>
<div class="t" style="left:1033.75px;top:273.13px;font-size:13.2px;line-height:1;color:#424242;font-weight:normal;font-family:'Liberation Sans',sans-serif;transform:translateX(-50%);">J</div>
<div class="r" style="left:1256px;top:270px;width:1px;height:19px;background:#d8d8d8;"></div>
<div class="t" style="left:1189.00px;top:273.13px;font-size:13.2px;line-height:1;color:#424242;font-weight:normal;font-family:'Liberation Sans',sans-serif;transform:translateX(-50%);">K</div>
<div class="r" style="left:1426px;top:270px;width:1px;height:19px;background:#d8d8d8;"></div>
<div class="t" style="left:1341.00px;top:273.13px;font-size:13.2px;line-height:1;color:#424242;font-weight:normal;font-family:'Liberation Sans',sans-serif;transform:translateX(-50%);">L</div>
<div class="r" style="left:1507px;top:270px;width:1px;height:19px;background:#d8d8d8;"></div>
<div class="t" style="left:1467.00px;top:273.13px;font-size:13.2px;line-height:1;color:#107c41;font-weight:normal;font-family:'Liberation Sans',sans-serif;transform:translateX(-50%);">M</div>
<div class="r" style="left:1620px;top:270px;width:1px;height:19px;background:#d8d8d8;"></div>
<div class="t" style="left:1565.25px;top:273.13px;font-size:13.2px;line-height:1;color:#424242;font-weight:normal;font-family:'Liberation Sans',sans-serif;transform:translateX(-50%);">P</div>
<div class="r" style="left:1746px;top:270px;width:1px;height:19px;background:#d8d8d8;"></div>
<div class="t" style="left:1683.50px;top:273.13px;font-size:13.2px;line-height:1;color:#424242;font-weight:normal;font-family:'Liberation Sans',sans-serif;transform:translateX(-50%);">Q</div>
<div class="r" style="left:1870px;top:270px;width:1px;height:19px;background:#d8d8d8;"></div>
<div class="t" style="left:1808.50px;top:273.13px;font-size:13.2px;line-height:1;color:#424242;font-weight:normal;font-family:'Liberation Sans',sans-serif;transform:translateX(-50%);">R</div>
<div class="r" style="left:1893px;top:270px;width:1px;height:19px;background:#d8d8d8;"></div>
<div class="r" style="left:1508px;top:270px;width:1px;height:19px;background:#d8d8d8;"></div>
<div class="r" style="left:1509.5px;top:270px;width:1px;height:19px;background:#d8d8d8;"></div>
<div class="r" style="left:0px;top:289px;width:1893px;height:1px;background:#b8b8b8;"></div>
<div class="r" style="left:24px;top:270px;width:1px;height:683px;background:#b8b8b8;"></div>
<div class="r" style="left:0px;top:307px;width:24px;height:1px;background:#dadada;"></div>
<div class="t" style="left:11.50px;top:293.03px;font-size:13.2px;line-height:1;color:#424242;font-weight:normal;font-family:'Liberation Sans',sans-serif;transform:translateX(-50%);">1</div>
<div class="r" style="left:0px;top:359px;width:24px;height:1px;background:#dadada;"></div>
<div class="t" style="left:11.50px;top:344.03px;font-size:13.2px;line-height:1;color:#424242;font-weight:normal;font-family:'Liberation Sans',sans-serif;transform:translateX(-50%);">2</div>
<div class="r" style="left:0px;top:400px;width:24px;height:1px;background:#dadada;"></div>
<div class="t" style="left:11.50px;top:385.23px;font-size:13.2px;line-height:1;color:#424242;font-weight:normal;font-family:'Liberation Sans',sans-serif;transform:translateX(-50%);">3</div>
<div class="r" style="left:0px;top:419px;width:24px;height:1px;background:#dadada;"></div>
<div class="t" style="left:11.50px;top:404.73px;font-size:13.2px;line-height:1;color:#424242;font-weight:normal;font-family:'Liberation Sans',sans-serif;transform:translateX(-50%);">4</div>
<div class="r" style="left:0px;top:420.2px;width:24px;height:19.05000000000001px;background:#d6d6d6;"></div>
<div class="r" style="left:23px;top:420.2px;width:2px;height:19.05000000000001px;background:#107c41;"></div>
<div class="r" style="left:0px;top:438px;width:24px;height:1px;background:#dadada;"></div>
<div class="t" style="left:11.50px;top:423.78px;font-size:13.2px;line-height:1;color:#107c41;font-weight:normal;font-family:'Liberation Sans',sans-serif;transform:translateX(-50%);">5</div>
<div class="r" style="left:0px;top:457px;width:24px;height:1px;background:#dadada;"></div>
<div class="t" style="left:11.50px;top:442.83px;font-size:13.2px;line-height:1;color:#424242;font-weight:normal;font-family:'Liberation Sans',sans-serif;transform:translateX(-50%);">6</div>
<div class="r" style="left:0px;top:476px;width:24px;height:1px;background:#dadada;"></div>
<div class="t" style="left:11.50px;top:461.88px;font-size:13.2px;line-height:1;color:#424242;font-weight:normal;font-family:'Liberation Sans',sans-serif;transform:translateX(-50%);">7</div>
<div class="r" style="left:0px;top:495px;width:24px;height:1px;background:#dadada;"></div>
<div class="t" style="left:11.50px;top:480.93px;font-size:13.2px;line-height:1;color:#424242;font-weight:normal;font-family:'Liberation Sans',sans-serif;transform:translateX(-50%);">8</div>
<div class="r" style="left:0px;top:514px;width:24px;height:1px;background:#dadada;"></div>
<div class="t" style="left:11.50px;top:499.98px;font-size:13.2px;line-height:1;color:#424242;font-weight:normal;font-family:'Liberation Sans',sans-serif;transform:translateX(-50%);">9</div>
<div class="r" style="left:0px;top:533px;width:24px;height:1px;background:#dadada;"></div>
<div class="t" style="left:11.50px;top:519.03px;font-size:13.2px;line-height:1;color:#424242;font-weight:normal;font-family:'Liberation Sans',sans-serif;transform:translateX(-50%);">10</div>
<div class="r" style="left:0px;top:553px;width:24px;height:1px;background:#dadada;"></div>
<div class="t" style="left:11.50px;top:538.08px;font-size:13.2px;line-height:1;color:#424242;font-weight:normal;font-family:'Liberation Sans',sans-serif;transform:translateX(-50%);">11</div>
<div class="r" style="left:0px;top:572px;width:24px;height:1px;background:#dadada;"></div>
<div class="t" style="left:11.50px;top:557.13px;font-size:13.2px;line-height:1;color:#424242;font-weight:normal;font-family:'Liberation Sans',sans-serif;transform:translateX(-50%);">12</div>
<div class="r" style="left:0px;top:591px;width:24px;height:1px;background:#dadada;"></div>
<div class="t" style="left:11.50px;top:576.18px;font-size:13.2px;line-height:1;color:#424242;font-weight:normal;font-family:'Liberation Sans',sans-serif;transform:translateX(-50%);">13</div>
<div class="r" style="left:0px;top:610px;width:24px;height:1px;background:#dadada;"></div>
<div class="t" style="left:11.50px;top:595.23px;font-size:13.2px;line-height:1;color:#424242;font-weight:normal;font-family:'Liberation Sans',sans-serif;transform:translateX(-50%);">14</div>
<div class="r" style="left:0px;top:629px;width:24px;height:1px;background:#dadada;"></div>
<div class="t" style="left:11.50px;top:614.28px;font-size:13.2px;line-height:1;color:#424242;font-weight:normal;font-family:'Liberation Sans',sans-serif;transform:translateX(-50%);">15</div>
<div class="r" style="left:0px;top:648px;width:24px;height:1px;background:#dadada;"></div>
<div class="t" style="left:11.50px;top:633.33px;font-size:13.2px;line-height:1;color:#424242;font-weight:normal;font-family:'Liberation Sans',sans-serif;transform:translateX(-50%);">16</div>
<div class="r" style="left:0px;top:667px;width:24px;height:1px;background:#dadada;"></div>
<div class="t" style="left:11.50px;top:652.38px;font-size:13.2px;line-height:1;color:#424242;font-weight:normal;font-family:'Liberation Sans',sans-serif;transform:translateX(-50%);">17</div>
<div class="r" style="left:0px;top:686px;width:24px;height:1px;background:#dadada;"></div>
<div class="t" style="left:11.50px;top:671.43px;font-size:13.2px;line-height:1;color:#424242;font-weight:normal;font-family:'Liberation Sans',sans-serif;transform:translateX(-50%);">18</div>
<div class="r" style="left:0px;top:705px;width:24px;height:1px;background:#dadada;"></div>
<div class="t" style="left:11.50px;top:690.48px;font-size:13.2px;line-height:1;color:#424242;font-weight:normal;font-family:'Liberation Sans',sans-serif;transform:translateX(-50%);">19</div>
<div class="r" style="left:0px;top:724px;width:24px;height:1px;background:#dadada;"></div>
<div class="t" style="left:11.50px;top:709.53px;font-size:13.2px;line-height:1;color:#424242;font-weight:normal;font-family:'Liberation Sans',sans-serif;transform:translateX(-50%);">20</div>
<div class="r" style="left:0px;top:743px;width:24px;height:1px;background:#dadada;"></div>
<div class="t" style="left:11.50px;top:728.58px;font-size:13.2px;line-height:1;color:#424242;font-weight:normal;font-family:'Liberation Sans',sans-serif;transform:translateX(-50%);">21</div>
<div class="r" style="left:0px;top:762px;width:24px;height:1px;background:#dadada;"></div>
<div class="t" style="left:11.50px;top:747.63px;font-size:13.2px;line-height:1;color:#424242;font-weight:normal;font-family:'Liberation Sans',sans-serif;transform:translateX(-50%);">22</div>
<div class="r" style="left:0px;top:781px;width:24px;height:1px;background:#dadada;"></div>
<div class="t" style="left:11.50px;top:766.68px;font-size:13.2px;line-height:1;color:#424242;font-weight:normal;font-family:'Liberation Sans',sans-serif;transform:translateX(-50%);">23</div>
<div class="r" style="left:0px;top:800px;width:24px;height:1px;background:#dadada;"></div>
<div class="t" style="left:11.50px;top:785.73px;font-size:13.2px;line-height:1;color:#424242;font-weight:normal;font-family:'Liberation Sans',sans-serif;transform:translateX(-50%);">24</div>
<div class="r" style="left:0px;top:819px;width:24px;height:1px;background:#dadada;"></div>
<div class="t" style="left:11.50px;top:804.78px;font-size:13.2px;line-height:1;color:#424242;font-weight:normal;font-family:'Liberation Sans',sans-serif;transform:translateX(-50%);">25</div>
<div class="r" style="left:0px;top:838px;width:24px;height:1px;background:#dadada;"></div>
<div class="t" style="left:11.50px;top:823.83px;font-size:13.2px;line-height:1;color:#424242;font-weight:normal;font-family:'Liberation Sans',sans-serif;transform:translateX(-50%);">26</div>
<div class="r" style="left:0px;top:857px;width:24px;height:1px;background:#dadada;"></div>
<div class="t" style="left:11.50px;top:842.88px;font-size:13.2px;line-height:1;color:#424242;font-weight:normal;font-family:'Liberation Sans',sans-serif;transform:translateX(-50%);">27</div>
<div class="r" style="left:0px;top:876px;width:24px;height:1px;background:#dadada;"></div>
<div class="t" style="left:11.50px;top:861.93px;font-size:13.2px;line-height:1;color:#424242;font-weight:normal;font-family:'Liberation Sans',sans-serif;transform:translateX(-50%);">28</div>
<div class="r" style="left:0px;top:895px;width:24px;height:1px;background:#dadada;"></div>
<div class="t" style="left:11.50px;top:880.98px;font-size:13.2px;line-height:1;color:#424242;font-weight:normal;font-family:'Liberation Sans',sans-serif;transform:translateX(-50%);">29</div>
<div class="r" style="left:0px;top:914px;width:24px;height:1px;background:#dadada;"></div>
<div class="t" style="left:11.50px;top:900.03px;font-size:13.2px;line-height:1;color:#424242;font-weight:normal;font-family:'Liberation Sans',sans-serif;transform:translateX(-50%);">30</div>
<div class="r" style="left:0px;top:934px;width:24px;height:1px;background:#dadada;"></div>
<div class="t" style="left:11.50px;top:919.08px;font-size:13.2px;line-height:1;color:#424242;font-weight:normal;font-family:'Liberation Sans',sans-serif;transform:translateX(-50%);">31</div>
<div class="r" style="left:0px;top:953px;width:24px;height:1px;background:#dadada;"></div>
<div class="t" style="left:11.50px;top:938.13px;font-size:13.2px;line-height:1;color:#424242;font-weight:normal;font-family:'Liberation Sans',sans-serif;transform:translateX(-50%);">32</div>
<div class="t" style="left: 53.3px; top: 303.86px; font-size: 35.6px; line-height: 1; color: rgb(0, 0, 0); font-weight: bold; font-family: &quot;Liberation Sans&quot;, sans-serif; text-shadow: rgba(0, 0, 0, 0.35) 1px 1.5px 2px; transform: scaleX(0.9754);">CONTAS A RECEBER</div>
<div class="r" style="left:40.5px;top:359.7px;width:1215px;height:41px;background:#000;"></div>
<div class="r" style="left:1255.5px;top:359px;width:615.3px;height:41.8px;background:#000;"></div>
<div class="r" style="left:133px;top:359.7px;width:1px;height:41px;background:#fff;"></div>
<div class="r" style="left:210.5px;top:359.7px;width:1px;height:41px;background:#fff;"></div>
<div class="r" style="left:390px;top:359.7px;width:1px;height:41px;background:#fff;"></div>
<div class="r" style="left:518px;top:359.7px;width:1px;height:41px;background:#fff;"></div>
<div class="r" style="left:636px;top:359.7px;width:1px;height:41px;background:#fff;"></div>
<div class="r" style="left:694px;top:359.7px;width:1px;height:41px;background:#fff;"></div>
<div class="r" style="left:806px;top:359.7px;width:1px;height:41px;background:#fff;"></div>
<div class="r" style="left:944.5px;top:359.7px;width:1px;height:41px;background:#fff;"></div>
<div class="r" style="left:1122px;top:359.7px;width:1px;height:41px;background:#fff;"></div>
<div class="r" style="left:40.5px;top:400px;width:1215px;height:1.2px;background:#5b9bd5;"></div>
<div class="r" style="left:0px;top:401px;width:1893px;height:1px;background:#b4b4b4;"></div>
<div class="t" style="left: 52.5px; top: 372.79px; font-size: 15.6px; line-height: 1; color: rgb(255, 255, 255); font-weight: bold; font-family: &quot;Liberation Sans&quot;, sans-serif; transform: scaleX(0.9455);">Empresas</div>
<div class="t" style="left: 159.6px; top: 361.49px; font-size: 15.6px; line-height: 1; color: rgb(255, 255, 255); font-weight: bold; font-family: &quot;Liberation Sans&quot;, sans-serif; transform: scaleX(0.927);">Cod</div>
<div class="t" style="left: 145.5px; top: 382.59px; font-size: 15.6px; line-height: 1; color: rgb(255, 255, 255); font-weight: bold; font-family: &quot;Liberation Sans&quot;, sans-serif; transform: scaleX(1.0423);">Cliente</div>
<div class="t" style="left: 249.7px; top: 372.59px; font-size: 15.6px; line-height: 1; color: rgb(255, 255, 255); font-weight: bold; font-family: &quot;Liberation Sans&quot;, sans-serif; transform: scaleX(1.0366);">Nome Cliente</div>
<div class="t" style="left: 422.3px; top: 372.59px; font-size: 15.6px; line-height: 1; color: rgb(255, 255, 255); font-weight: bold; font-family: &quot;Liberation Sans&quot;, sans-serif; transform: scaleX(1.0386);">Telefone</div>
<div class="t" style="left: 546.4px; top: 372.59px; font-size: 15.6px; line-height: 1; color: rgb(255, 255, 255); font-weight: bold; font-family: &quot;Liberation Sans&quot;, sans-serif; transform: scaleX(1.0493);">N°Titulo</div>
<div class="t" style="left: 638px; top: 372.59px; font-size: 15.6px; line-height: 1; color: rgb(255, 255, 255); font-weight: bold; font-family: &quot;Liberation Sans&quot;, sans-serif; transform: scaleX(0.991);">Parcela</div>
<div class="t" style="left: 730.8px; top: 372.59px; font-size: 15.6px; line-height: 1; color: rgb(255, 255, 255); font-weight: bold; font-family: &quot;Liberation Sans&quot;, sans-serif; transform: scaleX(1.0409);">Valor</div>
<div class="t" style="left: 810.4px; top: 371.79px; font-size: 15.6px; line-height: 1; color: rgb(255, 255, 255); font-weight: bold; font-family: &quot;Liberation Sans&quot;, sans-serif; transform: scaleX(1.0473);">Data Vencimento</div>
<div class="t" style="left: 984px; top: 372.59px; font-size: 15.6px; line-height: 1; color: rgb(255, 255, 255); font-weight: bold; font-family: &quot;Liberation Sans&quot;, sans-serif; transform: scaleX(0.9893);">Tipo de conta</div>
<div class="t" style="left: 1153px; top: 372.59px; font-size: 15.6px; line-height: 1; color: rgb(255, 255, 255); font-weight: bold; font-family: &quot;Liberation Sans&quot;, sans-serif; transform: scaleX(0.979);">Descrição</div>
<div class="t" style="left: 1258.8px; top: 372.59px; font-size: 15.6px; line-height: 1; color: rgb(255, 255, 255); font-weight: bold; font-family: &quot;Liberation Sans&quot;, sans-serif; transform: scaleX(0.9859);">Formas de Pagamento</div>
<div class="t" style="left: 1444px; top: 372.59px; font-size: 15.6px; line-height: 1; color: rgb(255, 255, 255); font-weight: bold; font-family: &quot;Liberation Sans&quot;, sans-serif; transform: scaleX(0.9985);">Status</div>
<div class="t" style="left: 1510.4px; top: 372.59px; font-size: 15.6px; line-height: 1; color: rgb(255, 255, 255); font-weight: bold; font-family: &quot;Liberation Sans&quot;, sans-serif; transform: scaleX(1.0077);">Valor recebido</div>
<div class="t" style="left: 1623px; top: 372.59px; font-size: 15.6px; line-height: 1; color: rgb(255, 255, 255); font-weight: bold; font-family: &quot;Liberation Sans&quot;, sans-serif; transform: scaleX(1.0342);">Valor em aberto</div>
<div class="t" style="left: 1749px; top: 372.59px; font-size: 15.6px; line-height: 1; color: rgb(255, 255, 255); font-weight: bold; font-family: &quot;Liberation Sans&quot;, sans-serif; transform: scaleX(1.0245);">Valor em atraso</div>
<div class="r" style="left:211px;top:401px;width:179px;height:95.5px;background:#f0f0f0;"></div>
<div class="r" style="left:1508.5px;top:401px;width:362px;height:95.5px;background:#f0f0f0;"></div>
<div class="r" style="left:40px;top:420px;width:1831px;height:1.2px;background:#000;"></div>
<div class="r" style="left:40px;top:439px;width:1831px;height:1.2px;background:#000;"></div>
<div class="r" style="left:40px;top:458px;width:1831px;height:1.2px;background:#000;"></div>
<div class="r" style="left:40px;top:477px;width:1831px;height:1.2px;background:#000;"></div>
<div class="r" style="left:40px;top:496px;width:1831px;height:1.2px;background:#000;"></div>
<div class="r" style="left:40px;top:401px;width:1.2px;height:96px;background:#000;"></div>
<div class="r" style="left:133px;top:401px;width:1.2px;height:96px;background:#000;"></div>
<div class="r" style="left:210.5px;top:401px;width:1.2px;height:96px;background:#000;"></div>
<div class="r" style="left:390px;top:401px;width:1.2px;height:96px;background:#000;"></div>
<div class="r" style="left:518px;top:401px;width:1.2px;height:96px;background:#000;"></div>
<div class="r" style="left:636px;top:401px;width:1.2px;height:96px;background:#000;"></div>
<div class="r" style="left:694px;top:401px;width:1.2px;height:96px;background:#000;"></div>
<div class="r" style="left:806px;top:401px;width:1.2px;height:96px;background:#000;"></div>
<div class="r" style="left:944.5px;top:401px;width:1.2px;height:96px;background:#000;"></div>
<div class="r" style="left:1122px;top:401px;width:1.2px;height:96px;background:#000;"></div>
<div class="r" style="left:1255px;top:401px;width:1.2px;height:96px;background:#000;"></div>
<div class="r" style="left:1426px;top:401px;width:1.2px;height:96px;background:#000;"></div>
<div class="r" style="left:1508px;top:401px;width:1.2px;height:96px;background:#000;"></div>
<div class="r" style="left:1620px;top:401px;width:1.2px;height:96px;background:#000;"></div>
<div class="r" style="left:1746px;top:401px;width:1.2px;height:96px;background:#000;"></div>
<div class="r" style="left:1870px;top:401px;width:1.2px;height:96px;background:#000;"></div>
<div class="t" style="left: 75.4px; top: 404.74px; font-size: 13.3px; line-height: 1; color: rgb(0, 0, 0); font-weight: normal; font-family: &quot;Liberation Sans&quot;, sans-serif; -webkit-text-stroke: 0.25px currentcolor; transform: scaleX(0.8476);">GTU</div>
<div class="t" style="left: 151.8px; top: 404.74px; font-size: 13.3px; line-height: 1; color: rgb(0, 0, 0); font-weight: normal; font-family: &quot;Liberation Sans&quot;, sans-serif; -webkit-text-stroke: 0.25px currentcolor; transform: scaleX(0.9375);">000906</div>
<div class="t" style="left: 229.9px; top: 404.74px; font-size: 13.3px; line-height: 1; color: rgb(0, 0, 0); font-weight: normal; font-family: &quot;Liberation Sans&quot;, sans-serif; -webkit-text-stroke: 0.25px currentcolor; transform: scaleX(0.9189);">BM BIKE IMPORTADORA</div>
<div class="t" style="left: 661.75px; top: 404.74px; font-size: 13.3px; line-height: 1; color: rgb(0, 0, 0); font-weight: normal; font-family: &quot;Liberation Sans&quot;, sans-serif; -webkit-text-stroke: 0.25px currentcolor; transform: scaleX(0.8776);">3</div>
<div class="t" style="left: 703.4px; top: 404.74px; font-size: 13.3px; line-height: 1; color: rgb(0, 0, 0); font-weight: normal; font-family: &quot;Liberation Sans&quot;, sans-serif; -webkit-text-stroke: 0.25px currentcolor; transform: scaleX(0.8176);">R$</div>
<div class="t" style="left: 759.6px; top: 404.74px; font-size: 13.3px; line-height: 1; color: rgb(0, 0, 0); font-weight: normal; font-family: &quot;Liberation Sans&quot;, sans-serif; -webkit-text-stroke: 0.25px currentcolor; transform: scaleX(0.9515);">984,86</div>
<div class="t" style="left: 842.95px; top: 404.74px; font-size: 13.3px; line-height: 1; color: rgb(0, 0, 0); font-weight: normal; font-family: &quot;Liberation Sans&quot;, sans-serif; -webkit-text-stroke: 0.25px currentcolor; transform: scaleX(0.981);">01/01/2025</div>
<div class="t" style="left: 972.8px; top: 404.74px; font-size: 13.3px; line-height: 1; color: rgb(0, 0, 0); font-weight: normal; font-family: &quot;Liberation Sans&quot;, sans-serif; -webkit-text-stroke: 0.25px currentcolor; transform: scaleX(1.0364);">Vendas de produtos</div>
<div class="t" style="left: 1322.3px; top: 404.74px; font-size: 13.3px; line-height: 1; color: rgb(0, 0, 0); font-weight: normal; font-family: &quot;Liberation Sans&quot;, sans-serif; -webkit-text-stroke: 0.25px currentcolor; transform: scaleX(1.0132);">Boleto</div>
<div class="t" style="left: 1437.2px; top: 404.74px; font-size: 13.3px; line-height: 1; color: rgb(255, 192, 0); font-weight: normal; font-family: &quot;Liberation Sans&quot;, sans-serif; -webkit-text-stroke: 0.25px currentcolor; transform: scaleX(1.0009);">Em aberto</div>
<div class="t" style="left: 1517px; top: 404.74px; font-size: 13.3px; line-height: 1; color: rgb(0, 0, 0); font-weight: normal; font-family: &quot;Liberation Sans&quot;, sans-serif; -webkit-text-stroke: 0.25px currentcolor; transform: scaleX(0.8176);">R$</div>
<div class="t" style="left: 1594px; top: 404.74px; font-size: 13.3px; line-height: 1; color: rgb(0, 0, 0); font-weight: normal; font-family: &quot;Liberation Sans&quot;, sans-serif; -webkit-text-stroke: 0.25px currentcolor; transform: scaleX(0.8338);">-</div>
<div class="t" style="left: 1629px; top: 404.74px; font-size: 13.3px; line-height: 1; color: rgb(0, 0, 0); font-weight: normal; font-family: &quot;Liberation Sans&quot;, sans-serif; -webkit-text-stroke: 0.25px currentcolor; transform: scaleX(0.8176);">R$</div>
<div class="t" style="left: 1699.4px; top: 404.74px; font-size: 13.3px; line-height: 1; color: rgb(0, 0, 0); font-weight: normal; font-family: &quot;Liberation Sans&quot;, sans-serif; -webkit-text-stroke: 0.25px currentcolor; transform: scaleX(0.9515);">984,86</div>
<div class="t" style="left: 1754.7px; top: 404.74px; font-size: 13.3px; line-height: 1; color: rgb(0, 0, 0); font-weight: normal; font-family: &quot;Liberation Sans&quot;, sans-serif; -webkit-text-stroke: 0.25px currentcolor; transform: scaleX(0.8176);">R$</div>
<div class="t" style="left: 1844px; top: 404.74px; font-size: 13.3px; line-height: 1; color: rgb(0, 0, 0); font-weight: normal; font-family: &quot;Liberation Sans&quot;, sans-serif; -webkit-text-stroke: 0.25px currentcolor; transform: scaleX(0.8338);">-</div>
<div class="t" style="left: 65.4px; top: 423.94px; font-size: 13.3px; line-height: 1; color: rgb(0, 0, 0); font-weight: normal; font-family: &quot;Liberation Sans&quot;, sans-serif; -webkit-text-stroke: 0.25px currentcolor; transform: scaleX(0.8716);">SKORPI</div>
<div class="t" style="left: 151.8px; top: 423.94px; font-size: 13.3px; line-height: 1; color: rgb(0, 0, 0); font-weight: normal; font-family: &quot;Liberation Sans&quot;, sans-serif; -webkit-text-stroke: 0.25px currentcolor; transform: scaleX(0.9375);">000932</div>
<div class="t" style="left: 253.8px; top: 423.94px; font-size: 13.3px; line-height: 1; color: rgb(0, 0, 0); font-weight: normal; font-family: &quot;Liberation Sans&quot;, sans-serif; -webkit-text-stroke: 0.25px currentcolor; transform: scaleX(0.8866);">A LESSA JUNIOR</div>
<div class="t" style="left: 662.1px; top: 423.94px; font-size: 13.3px; line-height: 1; color: rgb(0, 0, 0); font-weight: normal; font-family: &quot;Liberation Sans&quot;, sans-serif; -webkit-text-stroke: 0.25px currentcolor; transform: scaleX(0.7831);">1</div>
<div class="t" style="left: 703.4px; top: 423.94px; font-size: 13.3px; line-height: 1; color: rgb(0, 0, 0); font-weight: normal; font-family: &quot;Liberation Sans&quot;, sans-serif; -webkit-text-stroke: 0.25px currentcolor; transform: scaleX(0.8176);">R$</div>
<div class="t" style="left: 759.6px; top: 423.94px; font-size: 13.3px; line-height: 1; color: rgb(0, 0, 0); font-weight: normal; font-family: &quot;Liberation Sans&quot;, sans-serif; -webkit-text-stroke: 0.25px currentcolor; transform: scaleX(0.9515);">537,70</div>
<div class="t" style="left: 842.95px; top: 423.94px; font-size: 13.3px; line-height: 1; color: rgb(0, 0, 0); font-weight: normal; font-family: &quot;Liberation Sans&quot;, sans-serif; -webkit-text-stroke: 0.25px currentcolor; transform: scaleX(0.981);">01/02/2025</div>
<div class="t" style="left: 972.35px; top: 423.94px; font-size: 13.3px; line-height: 1; color: rgb(0, 0, 0); font-weight: normal; font-family: &quot;Liberation Sans&quot;, sans-serif; -webkit-text-stroke: 0.25px currentcolor; transform: scaleX(1.0314);">Receitas financeiras</div>
<div class="t" style="left: 1299.6px; top: 423.94px; font-size: 13.3px; line-height: 1; color: rgb(0, 0, 0); font-weight: normal; font-family: &quot;Liberation Sans&quot;, sans-serif; -webkit-text-stroke: 0.25px currentcolor; transform: scaleX(1.0345);">Transferência</div>
<div class="t" style="left: 1437.2px; top: 423.94px; font-size: 13.3px; line-height: 1; color: rgb(255, 0, 0); font-weight: normal; font-family: &quot;Liberation Sans&quot;, sans-serif; -webkit-text-stroke: 0.25px currentcolor; transform: scaleX(1.013);">Em atraso</div>
<div class="t" style="left: 1517px; top: 423.94px; font-size: 13.3px; line-height: 1; color: rgb(0, 0, 0); font-weight: normal; font-family: &quot;Liberation Sans&quot;, sans-serif; -webkit-text-stroke: 0.25px currentcolor; transform: scaleX(0.8176);">R$</div>
<div class="t" style="left: 1594px; top: 423.94px; font-size: 13.3px; line-height: 1; color: rgb(0, 0, 0); font-weight: normal; font-family: &quot;Liberation Sans&quot;, sans-serif; -webkit-text-stroke: 0.25px currentcolor; transform: scaleX(0.8338);">-</div>
<div class="t" style="left: 1629px; top: 423.94px; font-size: 13.3px; line-height: 1; color: rgb(0, 0, 0); font-weight: normal; font-family: &quot;Liberation Sans&quot;, sans-serif; -webkit-text-stroke: 0.25px currentcolor; transform: scaleX(0.8176);">R$</div>
<div class="t" style="left: 1720.1px; top: 423.94px; font-size: 13.3px; line-height: 1; color: rgb(0, 0, 0); font-weight: normal; font-family: &quot;Liberation Sans&quot;, sans-serif; -webkit-text-stroke: 0.25px currentcolor; transform: scaleX(0.8338);">-</div>
<div class="t" style="left: 1754.7px; top: 423.94px; font-size: 13.3px; line-height: 1; color: rgb(0, 0, 0); font-weight: normal; font-family: &quot;Liberation Sans&quot;, sans-serif; -webkit-text-stroke: 0.25px currentcolor; transform: scaleX(0.8176);">R$</div>
<div class="t" style="left: 1823.3px; top: 423.94px; font-size: 13.3px; line-height: 1; color: rgb(0, 0, 0); font-weight: normal; font-family: &quot;Liberation Sans&quot;, sans-serif; -webkit-text-stroke: 0.25px currentcolor; transform: scaleX(0.9515);">537,70</div>
<div class="t" style="left: 65.4px; top: 442.94px; font-size: 13.3px; line-height: 1; color: rgb(0, 0, 0); font-weight: normal; font-family: &quot;Liberation Sans&quot;, sans-serif; -webkit-text-stroke: 0.25px currentcolor; transform: scaleX(0.8716);">SKORPI</div>
<div class="t" style="left: 151.8px; top: 442.94px; font-size: 13.3px; line-height: 1; color: rgb(0, 0, 0); font-weight: normal; font-family: &quot;Liberation Sans&quot;, sans-serif; -webkit-text-stroke: 0.25px currentcolor; transform: scaleX(0.9375);">000932</div>
<div class="t" style="left: 253.8px; top: 442.94px; font-size: 13.3px; line-height: 1; color: rgb(0, 0, 0); font-weight: normal; font-family: &quot;Liberation Sans&quot;, sans-serif; -webkit-text-stroke: 0.25px currentcolor; transform: scaleX(0.8866);">A LESSA JUNIOR</div>
<div class="t" style="left: 662.1px; top: 442.94px; font-size: 13.3px; line-height: 1; color: rgb(0, 0, 0); font-weight: normal; font-family: &quot;Liberation Sans&quot;, sans-serif; -webkit-text-stroke: 0.25px currentcolor; transform: scaleX(0.7831);">1</div>
<div class="t" style="left: 703.4px; top: 442.94px; font-size: 13.3px; line-height: 1; color: rgb(0, 0, 0); font-weight: normal; font-family: &quot;Liberation Sans&quot;, sans-serif; -webkit-text-stroke: 0.25px currentcolor; transform: scaleX(0.8176);">R$</div>
<div class="t" style="left: 759.6px; top: 442.94px; font-size: 13.3px; line-height: 1; color: rgb(0, 0, 0); font-weight: normal; font-family: &quot;Liberation Sans&quot;, sans-serif; -webkit-text-stroke: 0.25px currentcolor; transform: scaleX(0.9515);">537,70</div>
<div class="t" style="left: 842.95px; top: 442.94px; font-size: 13.3px; line-height: 1; color: rgb(0, 0, 0); font-weight: normal; font-family: &quot;Liberation Sans&quot;, sans-serif; -webkit-text-stroke: 0.25px currentcolor; transform: scaleX(0.981);">01/03/2025</div>
<div class="t" style="left: 1008.85px; top: 442.94px; font-size: 13.3px; line-height: 1; color: rgb(0, 0, 0); font-weight: normal; font-family: &quot;Liberation Sans&quot;, sans-serif; -webkit-text-stroke: 0.25px currentcolor; transform: scaleX(0.9902);">Serviços</div>
<div class="t" style="left: 1289.4px; top: 442.94px; font-size: 13.3px; line-height: 1; color: rgb(0, 0, 0); font-weight: normal; font-family: &quot;Liberation Sans&quot;, sans-serif; -webkit-text-stroke: 0.25px currentcolor; transform: scaleX(1.0196);">Cartão de crédito</div>
<div class="t" style="left: 1452.75px; top: 442.94px; font-size: 13.3px; line-height: 1; color: rgb(0, 176, 80); font-weight: normal; font-family: &quot;Liberation Sans&quot;, sans-serif; -webkit-text-stroke: 0.25px currentcolor; transform: scaleX(0.9755);">Pago</div>
<div class="t" style="left: 1517px; top: 442.94px; font-size: 13.3px; line-height: 1; color: rgb(0, 0, 0); font-weight: normal; font-family: &quot;Liberation Sans&quot;, sans-serif; -webkit-text-stroke: 0.25px currentcolor; transform: scaleX(0.8176);">R$</div>
<div class="t" style="left: 1573.3px; top: 442.94px; font-size: 13.3px; line-height: 1; color: rgb(0, 0, 0); font-weight: normal; font-family: &quot;Liberation Sans&quot;, sans-serif; -webkit-text-stroke: 0.25px currentcolor; transform: scaleX(0.9515);">537,70</div>
<div class="t" style="left: 1629px; top: 442.94px; font-size: 13.3px; line-height: 1; color: rgb(0, 0, 0); font-weight: normal; font-family: &quot;Liberation Sans&quot;, sans-serif; -webkit-text-stroke: 0.25px currentcolor; transform: scaleX(0.8176);">R$</div>
<div class="t" style="left: 1720.1px; top: 442.94px; font-size: 13.3px; line-height: 1; color: rgb(0, 0, 0); font-weight: normal; font-family: &quot;Liberation Sans&quot;, sans-serif; -webkit-text-stroke: 0.25px currentcolor; transform: scaleX(0.8338);">-</div>
<div class="t" style="left: 1754.7px; top: 442.94px; font-size: 13.3px; line-height: 1; color: rgb(0, 0, 0); font-weight: normal; font-family: &quot;Liberation Sans&quot;, sans-serif; -webkit-text-stroke: 0.25px currentcolor; transform: scaleX(0.8176);">R$</div>
<div class="t" style="left: 1844px; top: 442.94px; font-size: 13.3px; line-height: 1; color: rgb(0, 0, 0); font-weight: normal; font-family: &quot;Liberation Sans&quot;, sans-serif; -webkit-text-stroke: 0.25px currentcolor; transform: scaleX(0.8338);">-</div>
<div class="t" style="left: 65.4px; top: 462.14px; font-size: 13.3px; line-height: 1; color: rgb(0, 0, 0); font-weight: normal; font-family: &quot;Liberation Sans&quot;, sans-serif; -webkit-text-stroke: 0.25px currentcolor; transform: scaleX(0.8716);">SKORPI</div>
<div class="t" style="left: 151.8px; top: 462.14px; font-size: 13.3px; line-height: 1; color: rgb(0, 0, 0); font-weight: normal; font-family: &quot;Liberation Sans&quot;, sans-serif; -webkit-text-stroke: 0.25px currentcolor; transform: scaleX(0.9375);">000906</div>
<div class="t" style="left: 229.9px; top: 462.14px; font-size: 13.3px; line-height: 1; color: rgb(0, 0, 0); font-weight: normal; font-family: &quot;Liberation Sans&quot;, sans-serif; -webkit-text-stroke: 0.25px currentcolor; transform: scaleX(0.9189);">BM BIKE IMPORTADORA</div>
<div class="t" style="left: 662.1px; top: 462.14px; font-size: 13.3px; line-height: 1; color: rgb(0, 0, 0); font-weight: normal; font-family: &quot;Liberation Sans&quot;, sans-serif; -webkit-text-stroke: 0.25px currentcolor; transform: scaleX(0.7831);">1</div>
<div class="t" style="left: 703.4px; top: 462.14px; font-size: 13.3px; line-height: 1; color: rgb(0, 0, 0); font-weight: normal; font-family: &quot;Liberation Sans&quot;, sans-serif; -webkit-text-stroke: 0.25px currentcolor; transform: scaleX(0.8176);">R$</div>
<div class="t" style="left: 759.6px; top: 462.14px; font-size: 13.3px; line-height: 1; color: rgb(0, 0, 0); font-weight: normal; font-family: &quot;Liberation Sans&quot;, sans-serif; -webkit-text-stroke: 0.25px currentcolor; transform: scaleX(0.9515);">453,24</div>
<div class="t" style="left: 842.95px; top: 462.14px; font-size: 13.3px; line-height: 1; color: rgb(0, 0, 0); font-weight: normal; font-family: &quot;Liberation Sans&quot;, sans-serif; -webkit-text-stroke: 0.25px currentcolor; transform: scaleX(0.981);">01/04/2025</div>
<div class="t" style="left: 972.35px; top: 462.14px; font-size: 13.3px; line-height: 1; color: rgb(0, 0, 0); font-weight: normal; font-family: &quot;Liberation Sans&quot;, sans-serif; -webkit-text-stroke: 0.25px currentcolor; transform: scaleX(1.0314);">Receitas financeiras</div>
<div class="t" style="left: 1299.6px; top: 462.14px; font-size: 13.3px; line-height: 1; color: rgb(0, 0, 0); font-weight: normal; font-family: &quot;Liberation Sans&quot;, sans-serif; -webkit-text-stroke: 0.25px currentcolor; transform: scaleX(1.0345);">Transferência</div>
<div class="t" style="left: 1452.75px; top: 462.14px; font-size: 13.3px; line-height: 1; color: rgb(0, 176, 80); font-weight: normal; font-family: &quot;Liberation Sans&quot;, sans-serif; -webkit-text-stroke: 0.25px currentcolor; transform: scaleX(0.9755);">Pago</div>
<div class="t" style="left: 1517px; top: 462.14px; font-size: 13.3px; line-height: 1; color: rgb(0, 0, 0); font-weight: normal; font-family: &quot;Liberation Sans&quot;, sans-serif; -webkit-text-stroke: 0.25px currentcolor; transform: scaleX(0.8176);">R$</div>
<div class="t" style="left: 1573.3px; top: 462.14px; font-size: 13.3px; line-height: 1; color: rgb(0, 0, 0); font-weight: normal; font-family: &quot;Liberation Sans&quot;, sans-serif; -webkit-text-stroke: 0.25px currentcolor; transform: scaleX(0.9515);">453,24</div>
<div class="t" style="left: 1629px; top: 462.14px; font-size: 13.3px; line-height: 1; color: rgb(0, 0, 0); font-weight: normal; font-family: &quot;Liberation Sans&quot;, sans-serif; -webkit-text-stroke: 0.25px currentcolor; transform: scaleX(0.8176);">R$</div>
<div class="t" style="left: 1720.1px; top: 462.14px; font-size: 13.3px; line-height: 1; color: rgb(0, 0, 0); font-weight: normal; font-family: &quot;Liberation Sans&quot;, sans-serif; -webkit-text-stroke: 0.25px currentcolor; transform: scaleX(0.8338);">-</div>
<div class="t" style="left: 1754.7px; top: 462.14px; font-size: 13.3px; line-height: 1; color: rgb(0, 0, 0); font-weight: normal; font-family: &quot;Liberation Sans&quot;, sans-serif; -webkit-text-stroke: 0.25px currentcolor; transform: scaleX(0.8176);">R$</div>
<div class="t" style="left: 1844px; top: 462.14px; font-size: 13.3px; line-height: 1; color: rgb(0, 0, 0); font-weight: normal; font-family: &quot;Liberation Sans&quot;, sans-serif; -webkit-text-stroke: 0.25px currentcolor; transform: scaleX(0.8338);">-</div>
<div class="t" style="left: 65.4px; top: 481.24px; font-size: 13.3px; line-height: 1; color: rgb(0, 0, 0); font-weight: normal; font-family: &quot;Liberation Sans&quot;, sans-serif; -webkit-text-stroke: 0.25px currentcolor; transform: scaleX(0.8716);">SKORPI</div>
<div class="t" style="left: 151.8px; top: 481.24px; font-size: 13.3px; line-height: 1; color: rgb(0, 0, 0); font-weight: normal; font-family: &quot;Liberation Sans&quot;, sans-serif; -webkit-text-stroke: 0.25px currentcolor; transform: scaleX(0.9375);">000906</div>
<div class="t" style="left: 229.9px; top: 481.24px; font-size: 13.3px; line-height: 1; color: rgb(0, 0, 0); font-weight: normal; font-family: &quot;Liberation Sans&quot;, sans-serif; -webkit-text-stroke: 0.25px currentcolor; transform: scaleX(0.9189);">BM BIKE IMPORTADORA</div>
<div class="t" style="left: 662.1px; top: 481.24px; font-size: 13.3px; line-height: 1; color: rgb(0, 0, 0); font-weight: normal; font-family: &quot;Liberation Sans&quot;, sans-serif; -webkit-text-stroke: 0.25px currentcolor; transform: scaleX(0.7831);">1</div>
<div class="t" style="left: 703.4px; top: 481.24px; font-size: 13.3px; line-height: 1; color: rgb(0, 0, 0); font-weight: normal; font-family: &quot;Liberation Sans&quot;, sans-serif; -webkit-text-stroke: 0.25px currentcolor; transform: scaleX(0.8176);">R$</div>
<div class="t" style="left: 749.4px; top: 481.24px; font-size: 13.3px; line-height: 1; color: rgb(0, 0, 0); font-weight: normal; font-family: &quot;Liberation Sans&quot;, sans-serif; -webkit-text-stroke: 0.25px currentcolor; transform: scaleX(0.9446);">1.057,55</div>
<div class="t" style="left: 842.95px; top: 481.24px; font-size: 13.3px; line-height: 1; color: rgb(0, 0, 0); font-weight: normal; font-family: &quot;Liberation Sans&quot;, sans-serif; -webkit-text-stroke: 0.25px currentcolor; transform: scaleX(0.981);">01/05/2025</div>
<div class="t" style="left: 972.8px; top: 481.24px; font-size: 13.3px; line-height: 1; color: rgb(0, 0, 0); font-weight: normal; font-family: &quot;Liberation Sans&quot;, sans-serif; -webkit-text-stroke: 0.25px currentcolor; transform: scaleX(1.0364);">Vendas de produtos</div>
<div class="t" style="left: 1332.7px; top: 481.24px; font-size: 13.3px; line-height: 1; color: rgb(0, 0, 0); font-weight: normal; font-family: &quot;Liberation Sans&quot;, sans-serif; -webkit-text-stroke: 0.25px currentcolor; transform: scaleX(0.9413);">Pix</div>
<div class="t" style="left: 1452.75px; top: 481.24px; font-size: 13.3px; line-height: 1; color: rgb(0, 176, 80); font-weight: normal; font-family: &quot;Liberation Sans&quot;, sans-serif; -webkit-text-stroke: 0.25px currentcolor; transform: scaleX(0.9755);">Pago</div>
<div class="t" style="left: 1517px; top: 481.24px; font-size: 13.3px; line-height: 1; color: rgb(0, 0, 0); font-weight: normal; font-family: &quot;Liberation Sans&quot;, sans-serif; -webkit-text-stroke: 0.25px currentcolor; transform: scaleX(0.8176);">R$</div>
<div class="t" style="left: 1563.1px; top: 481.24px; font-size: 13.3px; line-height: 1; color: rgb(0, 0, 0); font-weight: normal; font-family: &quot;Liberation Sans&quot;, sans-serif; -webkit-text-stroke: 0.25px currentcolor; transform: scaleX(0.9446);">1.057,55</div>
<div class="t" style="left: 1629px; top: 481.24px; font-size: 13.3px; line-height: 1; color: rgb(0, 0, 0); font-weight: normal; font-family: &quot;Liberation Sans&quot;, sans-serif; -webkit-text-stroke: 0.25px currentcolor; transform: scaleX(0.8176);">R$</div>
<div class="t" style="left: 1720.1px; top: 481.24px; font-size: 13.3px; line-height: 1; color: rgb(0, 0, 0); font-weight: normal; font-family: &quot;Liberation Sans&quot;, sans-serif; -webkit-text-stroke: 0.25px currentcolor; transform: scaleX(0.8338);">-</div>
<div class="t" style="left: 1754.7px; top: 481.24px; font-size: 13.3px; line-height: 1; color: rgb(0, 0, 0); font-weight: normal; font-family: &quot;Liberation Sans&quot;, sans-serif; -webkit-text-stroke: 0.25px currentcolor; transform: scaleX(0.8176);">R$</div>
<div class="t" style="left: 1844px; top: 481.24px; font-size: 13.3px; line-height: 1; color: rgb(0, 0, 0); font-weight: normal; font-family: &quot;Liberation Sans&quot;, sans-serif; -webkit-text-stroke: 0.25px currentcolor; transform: scaleX(0.8338);">-</div>
<div class="r" style="left:373.3px;top:400.3px;width:264.4px;height:103.7px;overflow:hidden;background:#e6e6e6;">
<div class="r" style="left:-20px;top:-10px;width:310px;height:130px;filter:blur(9px);">
<div class="r" style="left:20px;top:10px;width:270px;height:8px;background:#a8c0d6;"></div>
<div class="r" style="left:68px;top:25px;width:60px;height:78px;background:#b3b3b3;border-radius:8px;"></div>
<div class="r" style="left:192px;top:25px;width:60px;height:78px;background:#b3b3b3;border-radius:8px;"></div>
<div class="r" style="left:20px;top:108px;width:270px;height:12px;background:#f0f0f0;"></div>
</div>
<div class="r" style="left:0;top:0;width:264.4px;height:14px;background:linear-gradient(180deg,rgba(110,160,210,0.85) 0px,rgba(140,180,215,0.45) 5px,rgba(200,210,220,0) 13px);"></div></div>
<div class="r" style="left:1425.5px;top:419.4px;width:84px;height:21px;background:transparent;border:2px solid #107c41;box-sizing:border-box;"></div>
<div class="r" style="left:1505.5px;top:437px;width:5px;height:5px;background:#107c41;border:1px solid #fff;box-sizing:content-box;"></div>
<div class="r" style="left:1508.5px;top:420.5px;width:19px;height:18.5px;background:#f0f0f0;border:1px solid #c8c8c8;box-sizing:border-box;"></div>
<svg class="r" style="left:1513px;top:426.5px;" width="10" height="6" viewBox="0 0 10 6" fill="none"><path d="M0.5 0.5 H9.5 L5 5.5z" fill="#707070"></path></svg>
<div class="r" style="left:1531.8px;top:402.5px;width:31px;height:31px;background:#fff;border:1px solid #8a8a8a;border-radius:6px;box-sizing:border-box;box-shadow:0 3px 8px rgba(0,0,0,0.18);"></div>
<svg class="r" style="left:1538px;top:409px;" width="19" height="18" viewBox="0 0 37 34" fill="none"><defs>
<linearGradient id="cf1" x1="0" y1="0" x2="0" y2="1"><stop offset="0" stop-color="#22b4f8"></stop><stop offset="0.3" stop-color="#1796dc"></stop><stop offset="0.58" stop-color="#4aab6a"></stop><stop offset="0.8" stop-color="#a8c030"></stop><stop offset="1" stop-color="#f5c800"></stop></linearGradient>
<linearGradient id="cf2" x1="0" y1="0" x2="0" y2="1"><stop offset="0" stop-color="#a450f0"></stop><stop offset="0.5" stop-color="#ea5598"></stop><stop offset="0.85" stop-color="#f28668"></stop><stop offset="1" stop-color="#f5a050"></stop></linearGradient>
<linearGradient id="cf3" x1="0" y1="0" x2="1" y2="1"><stop offset="0" stop-color="#0a36c8"></stop><stop offset="1" stop-color="#2a86ee"></stop></linearGradient>
<linearGradient id="cf4" x1="0" y1="0" x2="1" y2="1"><stop offset="0" stop-color="#ff8a40"></stop><stop offset="1" stop-color="#e03a20"></stop></linearGradient>
</defs>
<path d="M21.5 0 C24.5 0 26.5 1.5 27.5 4.5 C28.3 7 29 9.5 31.5 10.1 H18.3z" fill="url(#cf3)"></path>
<path d="M8.6 24 H19.6 L16.3 33.6 C13.5 33.6 11.8 32.3 11 29.8z" fill="url(#cf4)"></path>
<path d="M7.7 0 H21.6 L13.8 24.3 H3.2 C1.1 24.3 -0.1 23 0.2 20.8 L2.4 7.8 C3.2 2.8 5 0 7.7 0z" fill="url(#cf1)"></path>
<path d="M23.2 10.1 H33.8 C35.9 10.1 37.1 11.6 36.8 13.6 L34.6 25 C33.7 30.5 31.6 33.6 28.5 33.6 H16.3z" fill="url(#cf2)"></path>
</svg>
<svg class="r" style="left:1863.5px;top:489.5px;" width="7" height="7" viewBox="0 0 7 7" fill="none"><path d="M7 0 V7 H0z" fill="#3c4fb8"></path></svg>
<div class="r" style="left:1896px;top:270.2px;width:21px;height:684.5px;background:#f4f4f4;border-radius:10px;"></div>
<svg class="r" style="left:1901px;top:276px;" width="11" height="9" viewBox="0 0 11 9" fill="none"><path d="M5.5 0.8 L10.5 8.2 H0.5z" fill="#707070" stroke="#707070" stroke-width="0.8" stroke-linejoin="round"></path></svg>
<div class="r" style="left:1901px;top:291px;width:11px;height:529px;background:#707070;border-radius:5.5px;"></div>
<svg class="r" style="left:1901px;top:940.5px;" width="11" height="9" viewBox="0 0 11 9" fill="none"><path d="M5.5 8.2 L10.5 0.8 H0.5z" fill="#707070" stroke="#707070" stroke-width="0.8" stroke-linejoin="round"></path></svg>
<div class="r" style="left:0px;top:953px;width:1919px;height:40px;background:linear-gradient(90deg,#e4eae7 0px,#e4eae7 250px,#e7e8e8 530px,#e8e8e8 850px,#e6eaea 1150px,#e5eae8 1919px);"></div>
<div class="r" style="left:250.8px;top:953px;width:274.2px;height:35px;background:#fff;border-radius:0 0 7px 7px;"></div>
<div class="r" style="left:242px;top:953px;width:9px;height:9px;background:#fff;"></div>
<div class="r" style="left:233px;top:953px;width:18px;height:18px;background:#e5eae7;border-top-right-radius:9px;"></div>
<div class="r" style="left:525px;top:953px;width:9px;height:9px;background:#fff;"></div>
<div class="r" style="left:525px;top:953px;width:18px;height:18px;background:#e7e8e8;border-top-left-radius:9px;"></div>
<svg class="r" style="left:29.5px;top:965px;" width="10" height="14" viewBox="0 0 10 14" fill="none"><path d="M8 1 L2 7 L8 13" stroke="#8a8a8a" stroke-width="1.3"></path></svg>
<svg class="r" style="left:71px;top:965px;" width="10" height="14" viewBox="0 0 10 14" fill="none"><path d="M2 1 L8 7 L2 13" stroke="#8a8a8a" stroke-width="1.3"></path></svg>
<div class="t" style="left: 152.3px; top: 965.62px; font-size: 16.4px; line-height: 1; color: rgb(36, 36, 36); font-weight: normal; font-family: &quot;Liberation Sans&quot;, sans-serif; transform: scaleX(1.004);">Cadastros</div>
<div class="r" style="left:245.5px;top:961px;width:1px;height:24px;background:#d0d0d0;"></div>
<div class="t" style="left: 262.3px; top: 962.75px; font-size: 16.6px; line-height: 1; color: rgb(31, 31, 31); font-weight: bold; font-family: &quot;Liberation Sans&quot;, sans-serif; transform: scaleX(1.0049);">Lançamentos Contas a Receber</div>
<div class="r" style="left:261px;top:983px;width:254.5px;height:2px;background:#107c41;"></div>
<div class="r" style="left:530px;top:961px;width:1px;height:24px;background:#d0d0d0;"></div>
<div class="t" style="left: 555.4px; top: 964.89px; font-size: 16.9px; line-height: 1; color: rgb(36, 36, 36); font-weight: normal; font-family: &quot;Liberation Sans&quot;, sans-serif; transform: scaleX(1.0031);">Lançamentos Contas a pagar</div>
<div class="r" style="left:797px;top:961px;width:1px;height:24px;background:#d0d0d0;"></div>
<svg class="r" style="left:849px;top:964px;" width="16" height="16" viewBox="0 0 16 16" fill="none"><path d="M7.5 1 V14.5 M0.8 7.7 H14.3" stroke="#242424" stroke-width="1.5"></path></svg>
<div class="r" style="left:1154px;top:968px;width:2.3px;height:2.3px;background:#242424;"></div>
<div class="r" style="left:1154px;top:972.5px;width:2.3px;height:2.3px;background:#242424;"></div>
<div class="r" style="left:1154px;top:977px;width:2.3px;height:2.3px;background:#242424;"></div>
<div class="r" style="left:1175.4px;top:962.5px;width:1717.3px;height:19.8px;background:#f4f4f4;border-radius:10px;"></div>
<svg class="r" style="left:1180px;top:967.5px;" width="10" height="10" viewBox="0 0 10 10" fill="none"><path d="M0.8 5 L9 0.5 V9.5z" fill="#707070" stroke="#707070" stroke-width="0.8" stroke-linejoin="round"></path></svg>
<div class="r" style="left:1195.8px;top:967.7px;width:638px;height:10px;background:#707070;border-radius:5px;"></div>
<svg class="r" style="left:1877.5px;top:967.5px;" width="10" height="10" viewBox="0 0 10 10" fill="none"><path d="M9.2 5 L1 0.5 V9.5z" fill="#707070" stroke="#707070" stroke-width="0.8" stroke-linejoin="round"></path></svg>
<div class="r" style="left:0px;top:993px;width:1919px;height:27px;background:#f3f3f3;"></div>
<div class="r" style="left:0px;top:1020px;width:1919px;height:3px;background:#1f1f1f;"></div>
<div class="t" style="left: 13.3px; top: 1000.76px; font-size: 12.8px; line-height: 1; color: rgb(48, 48, 48); font-weight: normal; font-family: &quot;Liberation Sans&quot;, sans-serif; transform: scaleX(0.9995);">Pronto</div>
<svg class="r" style="left:76.5px;top:999px;" width="20" height="17" viewBox="0 0 20 17" fill="none"><rect x="1" y="1" width="17" height="13" stroke="#424242" stroke-width="1.3"></rect><path d="M1 3.5 H18 M3.5 6 H6 M3.5 9 H6" stroke="#424242" stroke-width="1.1"></path><circle cx="13" cy="10.5" r="4.8" fill="#f3f3f3" stroke="#424242" stroke-width="1.4"></circle><circle cx="13" cy="10.5" r="2" fill="#242424"></circle></svg>
<svg class="r" style="left:116.5px;top:997.5px;" width="19" height="19" viewBox="0 0 19 19" fill="none"><circle cx="8.5" cy="2.8" r="1.9" stroke="#303030" stroke-width="1.1"></circle><path d="M1.5 5.5 C4 7.5 13 7.5 15.5 5.5 M6 7.5 C6 11 4.5 14 3 17 M11 7.5 V11" stroke="#303030" stroke-width="1.2"></path><path d="M9.5 11.5 L17 18.5 M17 11.5 L9.5 18.5" stroke="#303030" stroke-width="1.2"></path></svg>
<div class="t" style="left: 139.3px; top: 1000.85px; font-size: 12.7px; line-height: 1; color: rgb(36, 36, 36); font-weight: bold; font-family: &quot;Liberation Sans&quot;, sans-serif; transform: scaleX(0.9997);">Acessibilidade: investigar</div>
<svg class="r" style="left:1381px;top:999px;" width="20" height="18" viewBox="0 0 20 18" fill="none"><path d="M8 13.5 H1.5 V1 H17.5 V8" stroke="#303030" stroke-width="1.2"></path><circle cx="12.5" cy="12.5" r="2.2" stroke="#303030" stroke-width="1.2"></circle><path d="M12.5 8.3 V9.6 M12.5 15.4 V16.8 M8.3 12.5 H9.6 M15.4 12.5 H16.8 M9.5 9.5 L10.4 10.4 M14.6 14.6 L15.5 15.5 M15.5 9.5 L14.6 10.4 M10.4 14.6 L9.5 15.5" stroke="#303030" stroke-width="1.3"></path></svg>
<div class="t" style="left: 1403.5px; top: 1001.08px; font-size: 12.9px; line-height: 1; color: rgb(48, 48, 48); font-weight: normal; font-family: &quot;Liberation Sans&quot;, sans-serif; transform: scaleX(0.9988);">Exibir Configurações</div>
<div class="r" style="left:1547px;top:994px;width:50px;height:26px;background:#dcdcdc;"></div>
<svg class="r" style="left:1563px;top:998px;" width="17" height="17" viewBox="0 0 17 17" fill="none"><rect x="0.8" y="0.8" width="15.4" height="15.4" stroke="#303030" stroke-width="1.5"></rect><path d="M5.9 0.8 V16.2 M11.1 0.8 V16.2 M0.8 5.9 H16.2 M0.8 11.1 H16.2" stroke="#303030" stroke-width="1.5"></path></svg>
<svg class="r" style="left:1612.5px;top:998px;" width="19" height="17" viewBox="0 0 19 17" fill="none"><rect x="0.8" y="0.8" width="17" height="15.4" stroke="#303030" stroke-width="1.4"></rect><rect x="4.5" y="3.5" width="9.5" height="10" stroke="#303030" stroke-width="1.2"></rect><path d="M6.5 6.3 H12 M6.5 8.5 H12 M6.5 10.7 H12" stroke="#303030" stroke-width="1"></path></svg>
<svg class="r" style="left:1663px;top:998px;" width="19" height="17" viewBox="0 0 19 17" fill="none"><rect x="0.8" y="0.8" width="17" height="15.4" stroke="#303030" stroke-width="1.4"></rect><path d="M6.5 0.8 V9.5 H0.8 M10.5 0.8 V6.5 H17.8" stroke="#303030" stroke-width="1.3"></path></svg>
<div class="r" style="left:1704px;top:1006.2px;width:10px;height:1.3px;background:#424242;"></div>
<div class="r" style="left:1720px;top:1007px;width:125px;height:1px;background:#8a8a8a;"></div>
<div class="r" style="left:1767px;top:1000px;width:6px;height:14px;background:#5f5f5f;border-radius:1px;"></div>
<div class="r" style="left:1782.5px;top:1003.5px;width:1px;height:7px;background:#8a8a8a;"></div>
<svg class="r" style="left:1850.5px;top:1001.5px;" width="11" height="11" viewBox="0 0 11 11" fill="none"><path d="M5.5 0.5 V10.5 M0.5 5.5 H10.5" stroke="#424242" stroke-width="1.2"></path></svg>
<div class="t" style="left: 1877.5px; top: 1002.04px; font-size: 12px; line-height: 1; color: rgb(66, 66, 66); font-weight: normal; font-family: &quot;Liberation Sans&quot;, sans-serif; transform: scaleX(0.9904);">80%</div>
</body></html>
